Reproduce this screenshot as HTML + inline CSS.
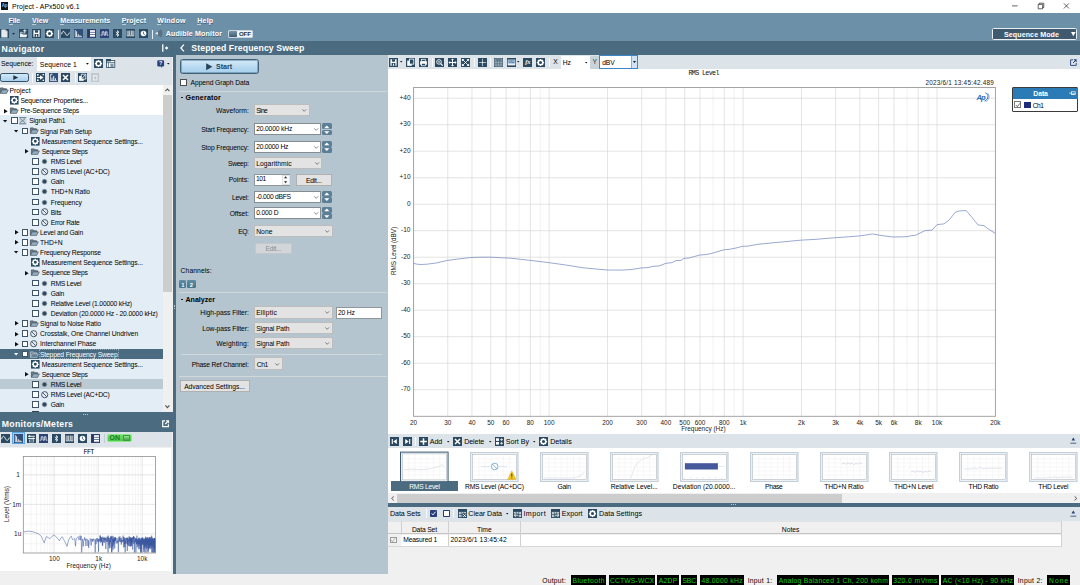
<!DOCTYPE html>
<html><head><meta charset="utf-8"><title>Project - APx500 v6.1</title>
<style>
html,body{margin:0;padding:0;}
body{width:1080px;height:585px;overflow:hidden;background:#f0f0f0;font-family:'Liberation Sans', sans-serif;position:relative;}
#r{position:absolute;left:0;top:0;width:1080px;height:585px;overflow:hidden;}
#r div,#r svg{position:absolute;box-sizing:border-box;}
#r svg{overflow:visible;}
#r svg text{font-family:'Liberation Sans', sans-serif;}
</style></head>
<body><div id="r">
<div style="left:0px;top:0px;width:1080px;height:12.75px;background:#fff;"></div>
<div style="left:0.9px;top:2.2px;width:7.6px;height:7.6px;background:#0c141c;"></div>
<div style="top:1.2px;line-height:10px;font-size:4.6px;color:#7fb8e6;letter-spacing:-0.3px;white-space:pre;font-weight:bold;left:-195.45px;width:400px;text-align:center;">Ap</div>
<div style="top:1.8px;line-height:10px;font-size:6.9px;color:#000;letter-spacing:0.06px;white-space:pre;left:12px;">Project - APx500 v6.1</div>
<svg style="left:1010px;top:0px;" width="70" height="12.75" viewBox="0 0 70 12.75"><path d="M2 5.9h5.6" stroke="#222" stroke-width="0.7" fill="none"/><path d="M28.2 4.4h4.4v4.4h-4.4z M29.4 4.4v-1.2h4.4v4.4h-1.2" stroke="#222" stroke-width="0.7" fill="none"/><path d="M53.8 3.3l5.2 5.2M59 3.3l-5.2 5.2" stroke="#222" stroke-width="0.7" fill="none"/></svg>
<div style="left:0px;top:12.75px;width:1080px;height:28.5px;background:#6d90a9;"></div>
<div style="top:16.1px;line-height:10px;font-size:7.1px;color:#fff;letter-spacing:-0.18px;white-space:pre;font-weight:bold;left:8.5px;text-shadow:0.3px 0.5px 0.5px rgba(30,50,70,.55);">File</div>
<div style="left:8.5px;top:24.3px;width:4.2px;height:0.6px;background:rgba(255,255,255,.55);"></div>
<div style="top:16.1px;line-height:10px;font-size:7.1px;color:#fff;letter-spacing:0.14px;white-space:pre;font-weight:bold;left:31.9px;text-shadow:0.3px 0.5px 0.5px rgba(30,50,70,.55);">View</div>
<div style="left:31.9px;top:24.3px;width:4.2px;height:0.6px;background:rgba(255,255,255,.55);"></div>
<div style="top:16.1px;line-height:10px;font-size:7.1px;color:#fff;letter-spacing:0.03px;white-space:pre;font-weight:bold;left:60.25px;text-shadow:0.3px 0.5px 0.5px rgba(30,50,70,.55);">Measurements</div>
<div style="left:60.25px;top:24.3px;width:4.2px;height:0.6px;background:rgba(255,255,255,.55);"></div>
<div style="top:16.1px;line-height:10px;font-size:7.1px;color:#fff;letter-spacing:0.03px;white-space:pre;font-weight:bold;left:121.8px;text-shadow:0.3px 0.5px 0.5px rgba(30,50,70,.55);">Project</div>
<div style="left:121.8px;top:24.3px;width:4.2px;height:0.6px;background:rgba(255,255,255,.55);"></div>
<div style="top:16.1px;line-height:10px;font-size:7.1px;color:#fff;letter-spacing:0.21px;white-space:pre;font-weight:bold;left:157.3px;text-shadow:0.3px 0.5px 0.5px rgba(30,50,70,.55);">Window</div>
<div style="left:157.3px;top:24.3px;width:4.2px;height:0.6px;background:rgba(255,255,255,.55);"></div>
<div style="top:16.1px;line-height:10px;font-size:7.1px;color:#fff;letter-spacing:0.16px;white-space:pre;font-weight:bold;left:197.3px;text-shadow:0.3px 0.5px 0.5px rgba(30,50,70,.55);">Help</div>
<div style="left:197.3px;top:24.3px;width:4.2px;height:0.6px;background:rgba(255,255,255,.55);"></div>
<svg style="left:0px;top:29.4px;" width="9" height="9" viewBox="0 0 9 9"><rect x="0" y="0" width="9" height="9" fill="#2b4a61"/><path d="M1.3 0.5h4.2l2 2v6H1.3z" fill="#e4e9ec"/><path d="M5.5 0.5v2h2z" fill="#9fb0bd"/></svg>
<svg style="left:12.3px;top:33px;" width="3" height="2" viewBox="0 0 3 2"><path d="M0 0h3L1.5 1.8z" fill="#1d2a36"/></svg>
<svg style="left:18.6px;top:29.4px;" width="9.2" height="9" viewBox="0 0 9.2 9"><rect x="0" y="0" width="9.2" height="9" fill="#2b4a61"/><path d="M0.9 4.6h2.2l0.8 0.8h4.4L7.4 8.2H0.9z" fill="#eef2f5"/><path d="M1.4 4.4V3.3h2l.7.8h1.2" fill="none" stroke="#eef2f5" stroke-width="0.7"/><path d="M5.8 0.4v4M4.2 1.7h3.2" stroke="#fff" stroke-width="0.9"/></svg>
<svg style="left:31.9px;top:29.4px" width="9" height="9" viewBox="0 0 9 9"><rect x="0" y="0" width="9" height="9" fill="#2b4a61"/><path d="M1.4 1.2h6.2v6.6H1.4z" fill="#fff"/><rect x="2.9" y="1.2" width="3.2" height="2.5" fill="#2b4a61"/><rect x="2.6" y="5" width="3.8" height="2.8" fill="#2b4a61"/><rect x="4.1" y="5.6" width="0.9" height="2.2" fill="#fff"/></svg>
<svg style="left:44.75px;top:29.4px" width="9" height="9" viewBox="0 0 9 9"><rect x="0" y="0" width="9" height="9" fill="#2b4a61"/><circle cx="4.5" cy="4.5" r="2.3" fill="none" stroke="#fff" stroke-width="1.5"/><path d="M4.5 0.9v1.2M4.5 6.9v1.2M0.9 4.5h1.2M6.9 4.5h1.2M2 2l.85.85M6.15 6.15L7 7M7 2l-.85.85M2.85 6.15L2 7" stroke="#fff" stroke-width="1.25"/></svg>
<div style="left:57.7px;top:29.6px;width:0.7px;height:9.2px;background:#e6edf2;"></div>
<svg style="left:61px;top:29.4px" width="9" height="9" viewBox="0 0 9 9"><rect x="0" y="0" width="9" height="9" fill="#2b4a61"/><path d="M0.6 5.2C1.6 1.6 2.9 1.6 4.2 4.3S6.9 7.2 8.4 3.6" fill="none" stroke="#fff" stroke-width="0.9"/></svg>
<svg style="left:74px;top:29.4px" width="9" height="9" viewBox="0 0 9 9"><rect x="0" y="0" width="9" height="9" fill="#2b4a61"/><rect x="0" y="0" width="9" height="9" fill="#30507a"/><path d="M1.3 1v6.7h6.7" fill="none" stroke="#fff" stroke-width="0.7"/><path d="M2.6 7.4V2.3M4.3 7.4V5.2M6 7.4V6.2" stroke="#fff" stroke-width="0.9"/></svg>
<svg style="left:87px;top:29.4px" width="9" height="9" viewBox="0 0 9 9"><rect x="0" y="0" width="9" height="9" fill="#2b4a61"/><rect x="0" y="0" width="9" height="9" fill="#2e4272"/><rect x="3" y="1.2" width="5" height="1.7" fill="#fff"/><rect x="3" y="3.6" width="5" height="1.7" fill="#fff"/><rect x="3" y="6" width="5" height="1.7" fill="#fff"/><path d="M1 2h1.4M1 4.4h1.4M1 6.8h1.4" stroke="#1a2748" stroke-width="0.9"/></svg>
<svg style="left:100px;top:29.4px" width="9" height="9" viewBox="0 0 9 9"><rect x="0" y="0" width="9" height="9" fill="#2b4a61"/><rect x="0" y="0" width="9" height="9" fill="#2c4374"/><path d="M0.7 6.2h1.5V2.8h1.8v3.4h1.4V2.8h1.6v3.4h1.3" fill="none" stroke="#fff" stroke-width="0.75"/></svg>
<svg style="left:113px;top:29.4px" width="9" height="9" viewBox="0 0 9 9"><rect x="0" y="0" width="9" height="9" fill="#2b4a61"/><path d="M2.8 2.9l3.2 3-1.6 1.5V1.6L6 3.1 2.8 6.1" fill="none" stroke="#fff" stroke-width="0.75"/></svg>
<svg style="left:126px;top:29.4px" width="9" height="9" viewBox="0 0 9 9"><rect x="0" y="0" width="9" height="9" fill="#2b4a61"/><path d="M1.2 1.6v5.4h1.6V1.6M3.7 1.6v5.4h1.6V1.6M6.2 1.6v5.4h1.6V1.6" fill="none" stroke="#fff" stroke-width="0.7"/></svg>
<svg style="left:139px;top:29.4px" width="9" height="9" viewBox="0 0 9 9"><rect x="0" y="0" width="9" height="9" fill="#2b4a61"/><circle cx="4.5" cy="4.5" r="2.8" fill="#fff"/><path d="M4.4 2.6v2.1l1.4 0.9" fill="none" stroke="#2b4a61" stroke-width="0.8"/></svg>
<div style="left:152.2px;top:29.6px;width:0.7px;height:9.2px;background:#e6edf2;"></div>
<svg style="left:155.2px;top:29.3px;" width="8" height="8.6" viewBox="0 0 8 8.6"><path d="M2.4 2.6L6.2 0.2c1.6 2.4 1.6 5.8 0 8.2L2.4 6z" fill="#5c7181"/><path d="M0.2 4.3L2.8 2.7v3.2z" fill="#eef3f6"/></svg>
<div style="top:29px;line-height:10px;font-size:7.1px;color:#fff;letter-spacing:0.17px;white-space:pre;font-weight:bold;left:165.7px;text-shadow:0.3px 0.5px 0.5px rgba(30,50,70,.55);">Audible Monitor</div>
<div style="left:228px;top:30.3px;width:24.7px;height:7.5px;background:#f2f5f7;border:0.6px solid #c9d4dc;border-radius:1.2px;"></div>
<div style="left:229.2px;top:31.3px;width:8.2px;height:5.4px;background:#56748a;border-radius:0.8px;background:linear-gradient(#7a94a7,#3f5c72);"></div>
<div style="top:29.3px;line-height:10px;font-size:6.2px;color:#20384a;letter-spacing:-0.1px;white-space:pre;font-weight:bold;left:44.95px;width:400px;text-align:center;">OFF</div>
<div style="left:992.2px;top:28.3px;width:85.3px;height:11.4px;background:#3f5a6e;border:0.7px solid #e9eff3;border-radius:1.6px;"></div>
<div style="top:29.6px;line-height:10px;font-size:7.1px;color:#fff;letter-spacing:0.08px;white-space:pre;font-weight:bold;left:831.54px;width:400px;text-align:center;">Sequence Mode</div>
<svg style="left:1071px;top:31.7px;" width="5" height="5" viewBox="0 0 5 5"><path d="M0 0h4.6L2.3 4.2z" fill="#fff"/></svg>
<div style="left:0px;top:40.9px;width:1080px;height:16.1px;background:#4a6b80;"></div>
<div style="top:43.5px;line-height:10px;font-size:8.7px;color:#fff;letter-spacing:0.3px;white-space:pre;font-weight:bold;left:1.6px;">Navigator</div>
<svg style="left:161.7px;top:44.2px;" width="7" height="8" viewBox="0 0 7 8"><path d="M0.8 0.2v7.6" stroke="#fff" stroke-width="1.3"/><path d="M4.6 2.2L6.4 4 4.6 5.8 2.8 4z" fill="#fff"/></svg>
<svg style="left:180.2px;top:44px;" width="5" height="8" viewBox="0 0 5 8"><path d="M3.9 0.6L0.9 4l3 3.4" fill="none" stroke="#fff" stroke-width="1.3"/></svg>
<div style="top:43.2px;line-height:10px;font-size:8.7px;color:#fff;letter-spacing:0.11px;white-space:pre;font-weight:bold;left:191.3px;">Stepped Frequency Sweep</div>
<div style="left:0px;top:573.5px;width:1080px;height:11.5px;background:#f0f0f0;"></div>
<div style="top:575.8px;line-height:10px;font-size:6.75px;color:#000;letter-spacing:0.22px;white-space:pre;left:542.3px;">Output:</div>
<div style="left:571px;top:575.3px;width:35px;height:9.7px;background:#000;"></div>
<div style="top:575.9px;line-height:10px;font-size:6.75px;color:#14cc14;letter-spacing:0.43px;white-space:pre;left:388.71px;width:400px;text-align:center;">Bluetooth</div>
<div style="left:608.7px;top:575.3px;width:46.6px;height:9.7px;background:#000;"></div>
<div style="top:575.9px;line-height:10px;font-size:6.75px;color:#14cc14;letter-spacing:0.14px;white-space:pre;left:432.07px;width:400px;text-align:center;">CCTWS-WCX</div>
<div style="left:657.3px;top:575.3px;width:21.4px;height:9.7px;background:#000;"></div>
<div style="top:575.9px;line-height:10px;font-size:6.75px;color:#14cc14;letter-spacing:0.29px;white-space:pre;left:468.14px;width:400px;text-align:center;">A2DP</div>
<div style="left:681.3px;top:575.3px;width:16px;height:9.7px;background:#000;"></div>
<div style="top:575.9px;line-height:10px;font-size:6.75px;color:#14cc14;letter-spacing:-0.16px;white-space:pre;left:489.22px;width:400px;text-align:center;">SBC</div>
<div style="left:700px;top:575.3px;width:44px;height:9.7px;background:#000;"></div>
<div style="top:575.9px;line-height:10px;font-size:6.75px;color:#14cc14;letter-spacing:0.32px;white-space:pre;left:522.16px;width:400px;text-align:center;">48.0000 kHz</div>
<div style="top:575.8px;line-height:10px;font-size:6.75px;color:#000;letter-spacing:0.26px;white-space:pre;left:747.7px;">Input 1:</div>
<div style="left:777.3px;top:575.3px;width:112px;height:9.7px;background:#000;"></div>
<div style="top:575.9px;line-height:10px;font-size:6.75px;color:#14cc14;letter-spacing:0.29px;white-space:pre;left:633.45px;width:400px;text-align:center;">Analog Balanced 1 Ch, 200 kohm</div>
<div style="left:891.7px;top:575.3px;width:47.3px;height:9.7px;background:#000;"></div>
<div style="top:575.9px;line-height:10px;font-size:6.75px;color:#14cc14;letter-spacing:0.44px;white-space:pre;left:715.57px;width:400px;text-align:center;">320.0 mVrms</div>
<div style="left:941.3px;top:575.3px;width:73px;height:9.7px;background:#000;"></div>
<div style="top:575.9px;line-height:10px;font-size:6.75px;color:#14cc14;letter-spacing:0.3px;white-space:pre;left:777.95px;width:400px;text-align:center;">AC (&lt;10 Hz) - 90 kHz</div>
<div style="top:575.8px;line-height:10px;font-size:6.75px;color:#000;letter-spacing:0.31px;white-space:pre;left:1017.7px;">Input 2:</div>
<div style="left:1047.3px;top:575.3px;width:22.7px;height:9.7px;background:#000;"></div>
<div style="top:575.9px;line-height:10px;font-size:6.75px;color:#14cc14;letter-spacing:0.99px;white-space:pre;left:859.14px;width:400px;text-align:center;">None</div>
<div style="left:0px;top:57px;width:172.2px;height:28px;background:#dde4e9;"></div>
<div style="top:58.7px;line-height:10px;font-size:6.75px;color:#000;letter-spacing:0.02px;white-space:pre;left:1px;">Sequence:</div>
<div style="left:37px;top:57.2px;width:54px;height:13.8px;background:#fff;"></div>
<div style="top:59.6px;line-height:10px;font-size:6.75px;color:#000;letter-spacing:0.1px;white-space:pre;left:39.8px;">Sequence 1</div>
<svg style="left:86px;top:63.2px;" width="3" height="2" viewBox="0 0 3 2"><path d="M0 0h2.8L1.4 1.7z" fill="#111"/></svg>
<svg style="left:93.5px;top:59.4px" width="9" height="9" viewBox="0 0 9 9"><rect x="0" y="0" width="9" height="9" fill="#2b4a61"/><circle cx="4.5" cy="4.5" r="2.3" fill="none" stroke="#fff" stroke-width="1.5"/><path d="M4.5 0.9v1.2M4.5 6.9v1.2M0.9 4.5h1.2M6.9 4.5h1.2M2 2l.85.85M6.15 6.15L7 7M7 2l-.85.85M2.85 6.15L2 7" stroke="#fff" stroke-width="1.25"/></svg>
<svg style="left:106.2px;top:59.4px;" width="9.3" height="9" viewBox="0 0 9.3 9"><rect x="0.4" y="1.4" width="8.4" height="7.2" fill="#fff"/><rect x="0" y="0" width="5" height="2.4" fill="#2b4a61"/><rect x="0.4" y="1.4" width="8.4" height="7.2" fill="none" stroke="#2b4a61" stroke-width="0.8"/><path d="M2.4 3.6v5M0.4 3.6h8.4" stroke="#2b4a61" stroke-width="0.7"/><rect x="4.4" y="4.6" width="3.2" height="3.4" fill="#7f95a6"/></svg>
<svg style="left:157.3px;top:59.6px;" width="7.6" height="8.6" viewBox="0 0 7.6 8.6"><path d="M0.3 1.3Q0.3 0.3 1.3 0.3h4.8Q7.1 0.3 7.1 1.3v4.2Q7.1 6.5 6.1 6.5H5l-.9 1.7V6.5H1.3Q0.3 6.5 0.3 5.5z" fill="#27407a"/><text x="3.7" y="5.4" font-size="5.4" font-weight="bold" fill="#fff" text-anchor="middle">?</text></svg>
<svg style="left:166.6px;top:63.2px;" width="3" height="2" viewBox="0 0 3 2"><path d="M0 0h2.6L1.3 1.6z" fill="#111"/></svg>
<div style="left:0.2px;top:72.9px;width:28.6px;height:9.1px;background:#bcdcf3;border:0.9px solid #34536a;border-radius:2.2px;background:linear-gradient(#d3e8f7,#a9d0ee);"></div>
<svg style="left:12.8px;top:75px;" width="6" height="5.2" viewBox="0 0 6 5.2"><path d="M0.3 0.2v4.8L5.2 2.6z" fill="#22323e"/></svg>
<div style="left:32.4px;top:73.4px;width:0.6px;height:9.6px;background:#f7f9fb;"></div>
<svg style="left:35.6px;top:73.4px" width="9" height="9" viewBox="0 0 9 9"><rect x="0" y="0" width="9" height="9" fill="#2b4a61"/><path d="M1 4.5h3" stroke="#fff" stroke-width="1.1"/><path d="M4 2.2v4.6l3.6-2.3z" fill="#fff"/><rect x="1" y="1" width="1.6" height="1.6" fill="#fff"/><rect x="1" y="6.4" width="1.6" height="1.6" fill="#fff"/><rect x="6.6" y="1" width="1.4" height="1.4" fill="#fff"/><rect x="6.6" y="6.6" width="1.4" height="1.4" fill="#fff"/></svg>
<svg style="left:48.5px;top:73.4px" width="9" height="9" viewBox="0 0 9 9"><rect x="0" y="0" width="9" height="9" fill="#2b4a61"/><rect x="0" y="0" width="9" height="9" fill="#2f4f78"/><path d="M1.4 1.2v6.4h6.4" fill="none" stroke="#fff" stroke-width="0.7"/><path d="M3 7.3V4.6M4.7 7.3V3M6.4 7.3V5.2" stroke="#fff" stroke-width="0.9"/><path d="M1.6 1.4h2M2.6 0.5v2" stroke="#fff" stroke-width="0.5"/></svg>
<svg style="left:61.3px;top:73.4px" width="9" height="9" viewBox="0 0 9 9"><rect x="0" y="0" width="9" height="9" fill="#2b4a61"/><path d="M2 2l5 5M7 2L2 7" stroke="#fff" stroke-width="1.5"/></svg>
<div style="left:74.6px;top:73.4px;width:0.6px;height:9.6px;background:#f7f9fb;"></div>
<svg style="left:78.1px;top:73.4px" width="9" height="9" viewBox="0 0 9 9"><rect x="0" y="0" width="9" height="9" fill="#2b4a61"/><rect x="1.1" y="3" width="4.6" height="4.8" fill="#fff"/><path d="M3.3 1.2h4.5v4.9H3.3z" fill="#2b4a61" stroke="#fff" stroke-width="0.8"/><path d="M3.8 5.6L7.3 1.8" stroke="#fff" stroke-width="0.9"/></svg>
<svg style="left:91.3px;top:73.4px;" width="8.2" height="9" viewBox="0 0 8.2 9"><rect x="0" y="0" width="8.2" height="9" fill="#c3c9ce"/><rect x="2" y="2" width="4.4" height="5.6" fill="#e6eaed"/><path d="M4.2 3.4v3M2.9 4.9h2.6" stroke="#aab2b9" stroke-width="0.7"/></svg>
<div style="left:0px;top:84.9px;width:172.2px;height:327.5px;background:#fff;"></div>
<div style="left:0px;top:115.2px;width:163.2px;height:297.2px;background:#e3edf6;"></div>
<svg style="left:0px;top:86.9px;" width="8.8" height="7" viewBox="0 0 8.8 7"><path d="M0.4 6.3V0.9h2.9l.7.9h2.6v1.2" fill="#6f8190" stroke="#3f4d58" stroke-width="0.7"/><path d="M2.1 2.9h6.2L6.7 6.4H0.4z" fill="#93acbf" stroke="#3f4d58" stroke-width="0.6"/></svg>
<div style="top:85.97px;line-height:10px;font-size:6.75px;color:#000;letter-spacing:-0px;white-space:pre;left:9.6px;">Project</div>
<svg style="left:10px;top:96.24px" width="8.6" height="8.6" viewBox="0 0 9 9"><rect x="0" y="0" width="9" height="9" fill="#2b4a61"/><circle cx="4.5" cy="4.5" r="2.3" fill="none" stroke="#fff" stroke-width="1.5"/><path d="M4.5 0.9v1.2M4.5 6.9v1.2M0.9 4.5h1.2M6.9 4.5h1.2M2 2l.85.85M6.15 6.15L7 7M7 2l-.85.85M2.85 6.15L2 7" stroke="#fff" stroke-width="1.25"/></svg>
<div style="top:96.11px;line-height:10px;font-size:6.75px;color:#000;letter-spacing:-0.15px;white-space:pre;left:20.4px;">Sequencer Properties...</div>
<svg style="left:3.5px;top:108.55px;" width="4" height="4.6" viewBox="0 0 4 4.6"><path d="M0 0v4.4L3.7 2.2z" fill="#111"/></svg>
<svg style="left:10px;top:107.18px;" width="8.8" height="7" viewBox="0 0 8.8 7"><path d="M0.4 6.3V0.9h2.9l.7.9h2.6v1.2" fill="#6f8190" stroke="#3f4d58" stroke-width="0.7"/><path d="M2.1 2.9h6.2L6.7 6.4H0.4z" fill="#93acbf" stroke="#3f4d58" stroke-width="0.6"/></svg>
<div style="top:106.25px;line-height:10px;font-size:6.75px;color:#000;letter-spacing:-0.21px;white-space:pre;left:20.4px;">Pre-Sequence Steps</div>
<svg style="left:3.2px;top:119.59px;" width="4.4" height="3" viewBox="0 0 4.4 3"><path d="M0 0h4.2L2.1 2.6z" fill="#111"/></svg>
<div style="left:11px;top:117.42px;width:6.7px;height:6.7px;background:#fff;border:0.8px solid #3e5468;"></div>
<svg style="left:19.3px;top:117.12px;" width="7.4" height="7.4" viewBox="0 0 7.4 7.4"><rect x="0" y="0" width="7.4" height="7.4" fill="#cdd7de"/><path d="M0.2 0.6h7M0.2 6.8h7" stroke="#5d7486" stroke-width="0.9"/><path d="M1.2 1.8l4.8 3.8M6 1.8L1.2 5.6" stroke="#6d8394" stroke-width="0.9"/></svg>
<div style="top:116.39px;line-height:10px;font-size:6.75px;color:#000;letter-spacing:-0.17px;white-space:pre;left:29.2px;">Signal Path1</div>
<svg style="left:13.6px;top:129.73px;" width="4.4" height="3" viewBox="0 0 4.4 3"><path d="M0 0h4.2L2.1 2.6z" fill="#111"/></svg>
<div style="left:21.8px;top:127.56px;width:6.7px;height:6.7px;background:#fff;border:0.8px solid #3e5468;"></div>
<svg style="left:30px;top:127.46px;" width="8.8" height="7" viewBox="0 0 8.8 7"><path d="M0.4 6.3V0.9h2.9l.7.9h2.6v1.2" fill="#6f8190" stroke="#3f4d58" stroke-width="0.7"/><path d="M2.1 2.9h6.2L6.7 6.4H0.4z" fill="#93acbf" stroke="#3f4d58" stroke-width="0.6"/></svg>
<div style="top:126.53px;line-height:10px;font-size:6.75px;color:#000;letter-spacing:-0.14px;white-space:pre;left:40px;">Signal Path Setup</div>
<svg style="left:31.3px;top:136.8px" width="8.6" height="8.6" viewBox="0 0 9 9"><rect x="0" y="0" width="9" height="9" fill="#2b4a61"/><circle cx="4.5" cy="4.5" r="2.3" fill="none" stroke="#fff" stroke-width="1.5"/><path d="M4.5 0.9v1.2M4.5 6.9v1.2M0.9 4.5h1.2M6.9 4.5h1.2M2 2l.85.85M6.15 6.15L7 7M7 2l-.85.85M2.85 6.15L2 7" stroke="#fff" stroke-width="1.25"/></svg>
<div style="top:136.67px;line-height:10px;font-size:6.75px;color:#000;letter-spacing:-0.14px;white-space:pre;left:41.7px;">Measurement Sequence Settings...</div>
<svg style="left:24.8px;top:149.11px;" width="4" height="4.6" viewBox="0 0 4 4.6"><path d="M0 0v4.4L3.7 2.2z" fill="#111"/></svg>
<svg style="left:31.3px;top:147.74px;" width="8.8" height="7" viewBox="0 0 8.8 7"><path d="M0.4 6.3V0.9h2.9l.7.9h2.6v1.2" fill="#6f8190" stroke="#3f4d58" stroke-width="0.7"/><path d="M2.1 2.9h6.2L6.7 6.4H0.4z" fill="#93acbf" stroke="#3f4d58" stroke-width="0.6"/></svg>
<div style="top:146.81px;line-height:10px;font-size:6.75px;color:#000;letter-spacing:-0.25px;white-space:pre;left:41.7px;">Sequence Steps</div>
<div style="left:32px;top:157.98px;width:6.7px;height:6.7px;background:#fff;border:0.8px solid #3e5468;"></div>
<svg style="left:42px;top:159.05px;" width="5" height="5" viewBox="0 0 5 5"><circle cx="2.5" cy="2.5" r="2.3" fill="#33485a" stroke="#8b9ba7" stroke-width="0.7"/></svg>
<div style="top:156.95px;line-height:10px;font-size:6.75px;color:#000;letter-spacing:-0.28px;white-space:pre;left:50.8px;">RMS Level</div>
<div style="left:32px;top:168.12px;width:6.7px;height:6.7px;background:#fff;border:0.8px solid #3e5468;"></div>
<svg style="left:40.6px;top:167.82px;" width="7.4" height="7.4" viewBox="0 0 7.4 7.4"><circle cx="3.7" cy="3.7" r="3.1" fill="none" stroke="#3c4c5a" stroke-width="0.9"/><path d="M1.6 1.6l4.2 4.2" stroke="#3c4c5a" stroke-width="0.9"/></svg>
<div style="top:167.09px;line-height:10px;font-size:6.75px;color:#000;letter-spacing:-0.22px;white-space:pre;left:50.8px;">RMS Level (AC+DC)</div>
<div style="left:32px;top:178.26px;width:6.7px;height:6.7px;background:#fff;border:0.8px solid #3e5468;"></div>
<svg style="left:42px;top:179.33px;" width="5" height="5" viewBox="0 0 5 5"><circle cx="2.5" cy="2.5" r="2.3" fill="#33485a" stroke="#8b9ba7" stroke-width="0.7"/></svg>
<div style="top:177.23px;line-height:10px;font-size:6.75px;color:#000;letter-spacing:-0.25px;white-space:pre;left:50.8px;">Gain</div>
<div style="left:32px;top:188.4px;width:6.7px;height:6.7px;background:#fff;border:0.8px solid #3e5468;"></div>
<svg style="left:42px;top:189.47px;" width="5" height="5" viewBox="0 0 5 5"><circle cx="2.5" cy="2.5" r="2.3" fill="#33485a" stroke="#8b9ba7" stroke-width="0.7"/></svg>
<div style="top:187.37px;line-height:10px;font-size:6.75px;color:#000;letter-spacing:-0.1px;white-space:pre;left:50.8px;">THD+N Ratio</div>
<div style="left:32px;top:198.54px;width:6.7px;height:6.7px;background:#fff;border:0.8px solid #3e5468;"></div>
<svg style="left:42px;top:199.61px;" width="5" height="5" viewBox="0 0 5 5"><circle cx="2.5" cy="2.5" r="2.3" fill="#33485a" stroke="#8b9ba7" stroke-width="0.7"/></svg>
<div style="top:197.51px;line-height:10px;font-size:6.75px;color:#000;letter-spacing:-0.1px;white-space:pre;left:50.8px;">Frequency</div>
<div style="left:32px;top:208.68px;width:6.7px;height:6.7px;background:#fff;border:0.8px solid #3e5468;"></div>
<svg style="left:40.6px;top:208.38px;" width="7.4" height="7.4" viewBox="0 0 7.4 7.4"><circle cx="3.7" cy="3.7" r="3.1" fill="none" stroke="#3c4c5a" stroke-width="0.9"/><path d="M1.6 1.6l4.2 4.2" stroke="#3c4c5a" stroke-width="0.9"/></svg>
<div style="top:207.65px;line-height:10px;font-size:6.75px;color:#000;letter-spacing:-0.19px;white-space:pre;left:50.8px;">Bits</div>
<div style="left:32px;top:218.82px;width:6.7px;height:6.7px;background:#fff;border:0.8px solid #3e5468;"></div>
<svg style="left:40.6px;top:218.52px;" width="7.4" height="7.4" viewBox="0 0 7.4 7.4"><circle cx="3.7" cy="3.7" r="3.1" fill="none" stroke="#3c4c5a" stroke-width="0.9"/><path d="M1.6 1.6l4.2 4.2" stroke="#3c4c5a" stroke-width="0.9"/></svg>
<div style="top:217.79px;line-height:10px;font-size:6.75px;color:#000;letter-spacing:-0.24px;white-space:pre;left:50.8px;">Error Rate</div>
<svg style="left:14.6px;top:230.23px;" width="4" height="4.6" viewBox="0 0 4 4.6"><path d="M0 0v4.4L3.7 2.2z" fill="#111"/></svg>
<div style="left:21.8px;top:228.96px;width:6.7px;height:6.7px;background:#fff;border:0.8px solid #3e5468;"></div>
<svg style="left:30px;top:228.86px;" width="8.8" height="7" viewBox="0 0 8.8 7"><path d="M0.4 6.3V0.9h2.9l.7.9h2.6v1.2" fill="#6f8190" stroke="#3f4d58" stroke-width="0.7"/><path d="M2.1 2.9h6.2L6.7 6.4H0.4z" fill="#93acbf" stroke="#3f4d58" stroke-width="0.6"/></svg>
<div style="top:227.93px;line-height:10px;font-size:6.75px;color:#000;letter-spacing:-0.17px;white-space:pre;left:40px;">Level and Gain</div>
<svg style="left:14.6px;top:240.37px;" width="4" height="4.6" viewBox="0 0 4 4.6"><path d="M0 0v4.4L3.7 2.2z" fill="#111"/></svg>
<div style="left:21.8px;top:239.1px;width:6.7px;height:6.7px;background:#fff;border:0.8px solid #3e5468;"></div>
<svg style="left:30px;top:239px;" width="8.8" height="7" viewBox="0 0 8.8 7"><path d="M0.4 6.3V0.9h2.9l.7.9h2.6v1.2" fill="#6f8190" stroke="#3f4d58" stroke-width="0.7"/><path d="M2.1 2.9h6.2L6.7 6.4H0.4z" fill="#93acbf" stroke="#3f4d58" stroke-width="0.6"/></svg>
<div style="top:238.07px;line-height:10px;font-size:6.75px;color:#000;letter-spacing:-0.04px;white-space:pre;left:40px;">THD+N</div>
<svg style="left:13.6px;top:251.41px;" width="4.4" height="3" viewBox="0 0 4.4 3"><path d="M0 0h4.2L2.1 2.6z" fill="#111"/></svg>
<div style="left:21.8px;top:249.24px;width:6.7px;height:6.7px;background:#fff;border:0.8px solid #3e5468;"></div>
<svg style="left:30px;top:249.14px;" width="8.8" height="7" viewBox="0 0 8.8 7"><path d="M0.4 6.3V0.9h2.9l.7.9h2.6v1.2" fill="#6f8190" stroke="#3f4d58" stroke-width="0.7"/><path d="M2.1 2.9h6.2L6.7 6.4H0.4z" fill="#93acbf" stroke="#3f4d58" stroke-width="0.6"/></svg>
<div style="top:248.21px;line-height:10px;font-size:6.75px;color:#000;letter-spacing:-0.19px;white-space:pre;left:40px;">Frequency Response</div>
<svg style="left:31.3px;top:258.48px" width="8.6" height="8.6" viewBox="0 0 9 9"><rect x="0" y="0" width="9" height="9" fill="#2b4a61"/><circle cx="4.5" cy="4.5" r="2.3" fill="none" stroke="#fff" stroke-width="1.5"/><path d="M4.5 0.9v1.2M4.5 6.9v1.2M0.9 4.5h1.2M6.9 4.5h1.2M2 2l.85.85M6.15 6.15L7 7M7 2l-.85.85M2.85 6.15L2 7" stroke="#fff" stroke-width="1.25"/></svg>
<div style="top:258.35px;line-height:10px;font-size:6.75px;color:#000;letter-spacing:-0.14px;white-space:pre;left:41.7px;">Measurement Sequence Settings...</div>
<svg style="left:24.8px;top:270.79px;" width="4" height="4.6" viewBox="0 0 4 4.6"><path d="M0 0v4.4L3.7 2.2z" fill="#111"/></svg>
<svg style="left:31.3px;top:269.42px;" width="8.8" height="7" viewBox="0 0 8.8 7"><path d="M0.4 6.3V0.9h2.9l.7.9h2.6v1.2" fill="#6f8190" stroke="#3f4d58" stroke-width="0.7"/><path d="M2.1 2.9h6.2L6.7 6.4H0.4z" fill="#93acbf" stroke="#3f4d58" stroke-width="0.6"/></svg>
<div style="top:268.49px;line-height:10px;font-size:6.75px;color:#000;letter-spacing:-0.25px;white-space:pre;left:41.7px;">Sequence Steps</div>
<div style="left:32px;top:279.66px;width:6.7px;height:6.7px;background:#fff;border:0.8px solid #3e5468;"></div>
<svg style="left:42px;top:280.73px;" width="5" height="5" viewBox="0 0 5 5"><circle cx="2.5" cy="2.5" r="2.3" fill="#33485a" stroke="#8b9ba7" stroke-width="0.7"/></svg>
<div style="top:278.63px;line-height:10px;font-size:6.75px;color:#000;letter-spacing:-0.28px;white-space:pre;left:50.8px;">RMS Level</div>
<div style="left:32px;top:289.8px;width:6.7px;height:6.7px;background:#fff;border:0.8px solid #3e5468;"></div>
<svg style="left:42px;top:290.87px;" width="5" height="5" viewBox="0 0 5 5"><circle cx="2.5" cy="2.5" r="2.3" fill="#33485a" stroke="#8b9ba7" stroke-width="0.7"/></svg>
<div style="top:288.77px;line-height:10px;font-size:6.75px;color:#000;letter-spacing:-0.25px;white-space:pre;left:50.8px;">Gain</div>
<div style="left:32px;top:299.94px;width:6.7px;height:6.7px;background:#fff;border:0.8px solid #3e5468;"></div>
<svg style="left:42px;top:301.01px;" width="5" height="5" viewBox="0 0 5 5"><circle cx="2.5" cy="2.5" r="2.3" fill="#33485a" stroke="#8b9ba7" stroke-width="0.7"/></svg>
<div style="top:298.91px;line-height:10px;font-size:6.75px;color:#000;letter-spacing:-0.2px;white-space:pre;left:50.8px;">Relative Level (1.00000 kHz)</div>
<div style="left:32px;top:310.08px;width:6.7px;height:6.7px;background:#fff;border:0.8px solid #3e5468;"></div>
<svg style="left:42px;top:311.15px;" width="5" height="5" viewBox="0 0 5 5"><circle cx="2.5" cy="2.5" r="2.3" fill="#33485a" stroke="#8b9ba7" stroke-width="0.7"/></svg>
<div style="top:309.05px;line-height:10px;font-size:6.75px;color:#000;letter-spacing:-0.17px;white-space:pre;left:50.8px;">Deviation (20.0000 Hz - 20.0000 kHz)</div>
<svg style="left:14.6px;top:321.49px;" width="4" height="4.6" viewBox="0 0 4 4.6"><path d="M0 0v4.4L3.7 2.2z" fill="#111"/></svg>
<div style="left:21.8px;top:320.22px;width:6.7px;height:6.7px;background:#fff;border:0.8px solid #3e5468;"></div>
<svg style="left:30px;top:320.12px;" width="8.8" height="7" viewBox="0 0 8.8 7"><path d="M0.4 6.3V0.9h2.9l.7.9h2.6v1.2" fill="#6f8190" stroke="#3f4d58" stroke-width="0.7"/><path d="M2.1 2.9h6.2L6.7 6.4H0.4z" fill="#93acbf" stroke="#3f4d58" stroke-width="0.6"/></svg>
<div style="top:319.19px;line-height:10px;font-size:6.75px;color:#000;letter-spacing:-0.1px;white-space:pre;left:40px;">Signal to Noise Ratio</div>
<svg style="left:14.6px;top:331.63px;" width="4" height="4.6" viewBox="0 0 4 4.6"><path d="M0 0v4.4L3.7 2.2z" fill="#111"/></svg>
<div style="left:21.8px;top:330.36px;width:6.7px;height:6.7px;background:#fff;border:0.8px solid #3e5468;"></div>
<svg style="left:30px;top:330.06px;" width="7.4" height="7.4" viewBox="0 0 7.4 7.4"><circle cx="3.7" cy="3.7" r="3.1" fill="none" stroke="#3c4c5a" stroke-width="0.9"/><path d="M1.6 1.6l4.2 4.2" stroke="#3c4c5a" stroke-width="0.9"/></svg>
<div style="top:329.33px;line-height:10px;font-size:6.75px;color:#000;letter-spacing:-0.08px;white-space:pre;left:40px;">Crosstalk, One Channel Undriven</div>
<svg style="left:14.6px;top:341.77px;" width="4" height="4.6" viewBox="0 0 4 4.6"><path d="M0 0v4.4L3.7 2.2z" fill="#111"/></svg>
<div style="left:21.8px;top:340.5px;width:6.7px;height:6.7px;background:#fff;border:0.8px solid #3e5468;"></div>
<svg style="left:30px;top:340.2px;" width="7.4" height="7.4" viewBox="0 0 7.4 7.4"><circle cx="3.7" cy="3.7" r="3.1" fill="none" stroke="#3c4c5a" stroke-width="0.9"/><path d="M1.6 1.6l4.2 4.2" stroke="#3c4c5a" stroke-width="0.9"/></svg>
<div style="top:339.47px;line-height:10px;font-size:6.75px;color:#000;letter-spacing:-0.11px;white-space:pre;left:40px;">Interchannel Phase</div>
<div style="left:0px;top:348.84px;width:163px;height:10.34px;background:#4a6b80;"></div>
<div style="left:38.6px;top:349.34px;width:80.4px;height:9.34px;border:0.5px dotted rgba(220,232,240,.45);"></div>
<svg style="left:13.6px;top:352.81px;" width="4.4" height="3" viewBox="0 0 4.4 3"><path d="M0 0h4.2L2.1 2.6z" fill="#fff"/></svg>
<div style="left:21.8px;top:350.64px;width:6.7px;height:6.7px;background:#fff;border:0.8px solid #3e5468;"></div>
<svg style="left:30px;top:350.54px;" width="8.8" height="7" viewBox="0 0 8.8 7"><path d="M0.4 6.3V0.9h2.9l.7.9h2.6v1.2" fill="#6f8190" stroke="#c3d0d9" stroke-width="0.7"/><path d="M2.1 2.9h6.2L6.7 6.4H0.4z" fill="#5f7e94" stroke="#c3d0d9" stroke-width="0.6"/></svg>
<div style="top:349.61px;line-height:10px;font-size:6.75px;color:#fff;letter-spacing:-0.17px;white-space:pre;left:40px;">Stepped Frequency Sweep</div>
<svg style="left:31.3px;top:359.88px" width="8.6" height="8.6" viewBox="0 0 9 9"><rect x="0" y="0" width="9" height="9" fill="#2b4a61"/><circle cx="4.5" cy="4.5" r="2.3" fill="none" stroke="#fff" stroke-width="1.5"/><path d="M4.5 0.9v1.2M4.5 6.9v1.2M0.9 4.5h1.2M6.9 4.5h1.2M2 2l.85.85M6.15 6.15L7 7M7 2l-.85.85M2.85 6.15L2 7" stroke="#fff" stroke-width="1.25"/></svg>
<div style="top:359.75px;line-height:10px;font-size:6.75px;color:#000;letter-spacing:-0.14px;white-space:pre;left:41.7px;">Measurement Sequence Settings...</div>
<svg style="left:24.8px;top:372.19px;" width="4" height="4.6" viewBox="0 0 4 4.6"><path d="M0 0v4.4L3.7 2.2z" fill="#111"/></svg>
<svg style="left:31.3px;top:370.82px;" width="8.8" height="7" viewBox="0 0 8.8 7"><path d="M0.4 6.3V0.9h2.9l.7.9h2.6v1.2" fill="#6f8190" stroke="#3f4d58" stroke-width="0.7"/><path d="M2.1 2.9h6.2L6.7 6.4H0.4z" fill="#93acbf" stroke="#3f4d58" stroke-width="0.6"/></svg>
<div style="top:369.89px;line-height:10px;font-size:6.75px;color:#000;letter-spacing:-0.25px;white-space:pre;left:41.7px;">Sequence Steps</div>
<div style="left:0px;top:379.36px;width:163px;height:10.14px;background:#bccad3;"></div>
<div style="left:32px;top:381.06px;width:6.7px;height:6.7px;background:#fff;border:0.8px solid #3e5468;"></div>
<svg style="left:42px;top:382.13px;" width="5" height="5" viewBox="0 0 5 5"><circle cx="2.5" cy="2.5" r="2.3" fill="#33485a" stroke="#8b9ba7" stroke-width="0.7"/></svg>
<div style="top:380.03px;line-height:10px;font-size:6.75px;color:#000;letter-spacing:-0.28px;white-space:pre;left:50.8px;">RMS Level</div>
<div style="left:32px;top:391.2px;width:6.7px;height:6.7px;background:#fff;border:0.8px solid #3e5468;"></div>
<svg style="left:40.6px;top:390.9px;" width="7.4" height="7.4" viewBox="0 0 7.4 7.4"><circle cx="3.7" cy="3.7" r="3.1" fill="none" stroke="#3c4c5a" stroke-width="0.9"/><path d="M1.6 1.6l4.2 4.2" stroke="#3c4c5a" stroke-width="0.9"/></svg>
<div style="top:390.17px;line-height:10px;font-size:6.75px;color:#000;letter-spacing:-0.22px;white-space:pre;left:50.8px;">RMS Level (AC+DC)</div>
<div style="left:32px;top:401.34px;width:6.7px;height:6.7px;background:#fff;border:0.8px solid #3e5468;"></div>
<svg style="left:42px;top:402.41px;" width="5" height="5" viewBox="0 0 5 5"><circle cx="2.5" cy="2.5" r="2.3" fill="#33485a" stroke="#8b9ba7" stroke-width="0.7"/></svg>
<div style="top:400.31px;line-height:10px;font-size:6.75px;color:#000;letter-spacing:-0.25px;white-space:pre;left:50.8px;">Gain</div>
<div style="left:32px;top:411.48px;width:6.6px;height:3px;background:#39424a;"></div>
<div style="left:163.2px;top:84.9px;width:9px;height:327.5px;background:#f0f0f0;"></div>
<div style="left:163.2px;top:95.2px;width:9px;height:196.4px;background:#cdcdcd;"></div>
<svg style="left:165.2px;top:88.4px;" width="5" height="3.6" viewBox="0 0 5 3.6"><path d="M0.4 3.2L2.4 1 4.4 3.2" fill="none" stroke="#505050" stroke-width="1.1"/></svg>
<svg style="left:165.2px;top:405.4px;" width="5" height="3.6" viewBox="0 0 5 3.6"><path d="M0.4 0.4L2.4 2.6 4.4 0.4" fill="none" stroke="#505050" stroke-width="1.1"/></svg>
<div style="left:0px;top:412.4px;width:176px;height:19.8px;background:#4a6b80;"></div>
<div style="left:83.4px;top:414px;width:0.9px;height:0.9px;background:#b9c7d1;"></div>
<div style="left:85.2px;top:414px;width:0.9px;height:0.9px;background:#b9c7d1;"></div>
<div style="left:87px;top:414px;width:0.9px;height:0.9px;background:#b9c7d1;"></div>
<div style="top:419px;line-height:10px;font-size:8.7px;color:#fff;letter-spacing:0.29px;white-space:pre;font-weight:bold;left:1.8px;">Monitors/Meters</div>
<svg style="left:162px;top:420px;" width="7.4" height="7.4" viewBox="0 0 7.4 7.4"><path d="M3 0.9H0.7v5.7h5.7V4.3" fill="none" stroke="#fff" stroke-width="1.2"/><path d="M3.6 0.2h3.5v3.5z" fill="#fff"/><path d="M6 1.3L3.2 4.1" stroke="#fff" stroke-width="1.3"/></svg>
<div style="left:0px;top:432.2px;width:172.2px;height:14.6px;background:#dde4e9;"></div>
<svg style="left:0.9px;top:433.8px" width="9" height="9" viewBox="0 0 9 9"><rect x="0" y="0" width="9" height="9" fill="#2b4a61"/><path d="M0.6 5.2C1.6 1.6 2.9 1.6 4.2 4.3S6.9 7.2 8.4 3.6" fill="none" stroke="#fff" stroke-width="0.9"/></svg>
<div style="left:12.1px;top:432.3px;width:12.5px;height:12.1px;background:#a2cef2;border:0.7px solid #5aa5e6;"></div>
<svg style="left:13.9px;top:433.8px" width="9" height="9" viewBox="0 0 9 9"><rect x="0" y="0" width="9" height="9" fill="#2b4a61"/><rect x="0" y="0" width="9" height="9" fill="#30507a"/><path d="M1.3 1v6.7h6.7" fill="none" stroke="#fff" stroke-width="0.7"/><path d="M2.6 7.4V2.3M4.3 7.4V5.2M6 7.4V6.2" stroke="#fff" stroke-width="0.9"/></svg>
<svg style="left:26.5px;top:433.8px" width="9" height="9" viewBox="0 0 9 9"><rect x="0" y="0" width="9" height="9" fill="#2b4a61"/><path d="M1.2 2.3h6.6M1.2 4.5h6.6" stroke="#fff" stroke-width="0.9"/><path d="M3.2 1v2.6L1 2.3zM5.8 3.2v2.6L8 4.5z" fill="#fff"/><rect x="2.6" y="6" width="4.2" height="2" fill="none" stroke="#fff" stroke-width="0.5"/></svg>
<svg style="left:39.4px;top:433.8px" width="9" height="9" viewBox="0 0 9 9"><rect x="0" y="0" width="9" height="9" fill="#2b4a61"/><rect x="0" y="0" width="9" height="9" fill="#2c4374"/><path d="M0.7 6.2h1.5V2.8h1.8v3.4h1.4V2.8h1.6v3.4h1.3" fill="none" stroke="#fff" stroke-width="0.75"/></svg>
<svg style="left:52.3px;top:433.8px" width="9" height="9" viewBox="0 0 9 9"><rect x="0" y="0" width="9" height="9" fill="#2b4a61"/><path d="M2.8 2.9l3.2 3-1.6 1.5V1.6L6 3.1 2.8 6.1" fill="none" stroke="#fff" stroke-width="0.75"/></svg>
<svg style="left:65.3px;top:433.8px" width="9" height="9" viewBox="0 0 9 9"><rect x="0" y="0" width="9" height="9" fill="#2b4a61"/><path d="M1.2 1.6v5.4h1.6V1.6M3.7 1.6v5.4h1.6V1.6M6.2 1.6v5.4h1.6V1.6" fill="none" stroke="#fff" stroke-width="0.7"/></svg>
<svg style="left:78.2px;top:433.8px" width="9" height="9" viewBox="0 0 9 9"><rect x="0" y="0" width="9" height="9" fill="#2b4a61"/><circle cx="4.5" cy="4.5" r="2.8" fill="#fff"/><path d="M4.4 2.6v2.1l1.4 0.9" fill="none" stroke="#2b4a61" stroke-width="0.8"/></svg>
<svg style="left:91.2px;top:433.8px" width="9" height="9" viewBox="0 0 9 9"><rect x="0" y="0" width="9" height="9" fill="#2b4a61"/><rect x="0" y="0" width="9" height="9" fill="#2e4272"/><rect x="3" y="1.2" width="5" height="1.7" fill="#fff"/><rect x="3" y="3.6" width="5" height="1.7" fill="#fff"/><rect x="3" y="6" width="5" height="1.7" fill="#fff"/><path d="M1 2h1.4M1 4.4h1.4M1 6.8h1.4" stroke="#1a2748" stroke-width="0.9"/></svg>
<div style="left:104.2px;top:433.6px;width:0.6px;height:9.2px;background:#c2ccd3;"></div>
<div style="left:107px;top:433.7px;width:24.7px;height:8.8px;background:#5fd65b;border:0.7px solid #8ce887;border-radius:1.4px;background:linear-gradient(#6fe06a,#4cc948);"></div>
<div style="top:433.2px;line-height:10px;font-size:6.9px;color:#1c7322;letter-spacing:0px;white-space:pre;font-weight:bold;left:-85.3px;width:400px;text-align:center;">ON</div>
<div style="left:122.6px;top:435px;width:7.8px;height:6.4px;background:#3f9a46;border-radius:0.9px;background:linear-gradient(#9be398,#43a04b);border:0.5px solid #3c9a44;"></div>
<div style="left:0px;top:446.8px;width:172.2px;height:126.5px;background:#f0f0f0;"></div>
<div style="left:0px;top:448px;width:171.1px;height:122.9px;background:#fff;"></div>
<div style="top:446.8px;line-height:10px;font-size:6.75px;color:#000;letter-spacing:-0.67px;white-space:pre;font-family:'Liberation Mono', monospace;left:-111.43px;width:400px;text-align:center;">FFT</div>
<svg style="left:0px;top:0px;pointer-events:none;" width="1080" height="585" viewBox="0 0 1080 585"><path d="M31.06 456.5V553" stroke="#ececec" stroke-width="0.55"/><path d="M36.57 456.5V553" stroke="#ececec" stroke-width="0.55"/><path d="M40.84 456.5V553" stroke="#ececec" stroke-width="0.55"/><path d="M44.33 456.5V553" stroke="#ececec" stroke-width="0.55"/><path d="M47.28 456.5V553" stroke="#ececec" stroke-width="0.55"/><path d="M49.83 456.5V553" stroke="#ececec" stroke-width="0.55"/><path d="M52.09 456.5V553" stroke="#ececec" stroke-width="0.55"/><path d="M54.1 456.5V553" stroke="#cfcfcf" stroke-width="0.55"/><path d="M67.37 456.5V553" stroke="#ececec" stroke-width="0.55"/><path d="M75.13 456.5V553" stroke="#ececec" stroke-width="0.55"/><path d="M80.64 456.5V553" stroke="#ececec" stroke-width="0.55"/><path d="M84.91 456.5V553" stroke="#ececec" stroke-width="0.55"/><path d="M88.4 456.5V553" stroke="#ececec" stroke-width="0.55"/><path d="M91.35 456.5V553" stroke="#ececec" stroke-width="0.55"/><path d="M93.9 456.5V553" stroke="#ececec" stroke-width="0.55"/><path d="M96.16 456.5V553" stroke="#ececec" stroke-width="0.55"/><path d="M98.17 456.5V553" stroke="#cfcfcf" stroke-width="0.55"/><path d="M111.44 456.5V553" stroke="#ececec" stroke-width="0.55"/><path d="M119.2 456.5V553" stroke="#ececec" stroke-width="0.55"/><path d="M124.71 456.5V553" stroke="#ececec" stroke-width="0.55"/><path d="M128.98 456.5V553" stroke="#ececec" stroke-width="0.55"/><path d="M132.47 456.5V553" stroke="#ececec" stroke-width="0.55"/><path d="M135.42 456.5V553" stroke="#ececec" stroke-width="0.55"/><path d="M137.97 456.5V553" stroke="#ececec" stroke-width="0.55"/><path d="M140.23 456.5V553" stroke="#ececec" stroke-width="0.55"/><path d="M142.24 456.5V553" stroke="#cfcfcf" stroke-width="0.55"/><path d="M23.3 543.75H155.5" stroke="#ececec" stroke-width="0.55"/><path d="M23.3 533.9H155.5" stroke="#cfcfcf" stroke-width="0.55"/><path d="M23.3 524.05H155.5" stroke="#ececec" stroke-width="0.55"/><path d="M23.3 514.2H155.5" stroke="#ececec" stroke-width="0.55"/><path d="M23.3 504.35H155.5" stroke="#cfcfcf" stroke-width="0.55"/><path d="M23.3 494.5H155.5" stroke="#ececec" stroke-width="0.55"/><path d="M23.3 484.65H155.5" stroke="#ececec" stroke-width="0.55"/><path d="M23.3 474.8H155.5" stroke="#cfcfcf" stroke-width="0.55"/><path d="M23.3 464.95H155.5" stroke="#ececec" stroke-width="0.55"/><path d="M23.3 532.2 L26 531.4 L28.9 531.1 L32 531.6 L35.5 532.6 L38.6 533.9 L41.4 536.4 L44.2 542.9 L46.25 536.7 L48 537.4 L49.7 538.75 L51.8 536.6 L53.9 535 L56.6 537.2 L59.4 540.8 L60.8 538 L62.2 536.7 L64 540 L65.6 543.4 L67 546.4 L68.6 540 L70.5 536.7 L71.43 536.18 L72.31 539.4 L73.16 539.6 L73.97 538.56 L74.75 538.95 L75.49 546.17 L76.21 538.54 L76.9 538.22 L77.57 537.29 L78.22 536.52 L78.84 540.18 L79.45 539.31 L80.04 535.6 L80.6 540.26 L81.16 535.93 L81.69 552.5 L82.22 542.73 L82.73 538.81 L83.22 546.41 L83.7 540.58 L84.18 540.08 L84.63 537.34 L85.08 540.35 L85.52 538.99 L85.95 545.96 L86.37 538.76 L86.78 538.92 L87.18 539.88 L87.58 539.63 L87.96 546.02 L88.34 540.19 L88.71 547.95 L89.07 543.77 L89.43 542.77 L89.78 542.65 L90.13 538.45 L90.46 539.61 L90.8 541.07 L91.12 545.49 L91.44 542.69 L91.76 538.82 L92.07 540.63 L92.38 539.29 L92.68 541.88 L92.97 541.41 L93.26 538.61 L93.55 539.67 L93.83 540.26 L94.11 539.22 L94.39 540.52 L94.66 540.84 L94.93 543.86 L95.19 552.5 L95.45 545.79 L95.71 539.09 L95.96 543.95 L96.21 543.22 L96.46 538.53 L96.7 538.06 L96.94 538.3 L97.18 540 L97.41 541.45 L97.64 538.35 L97.87 538.84 L98.1 542.22 L98.32 538.96 L98.54 551.72 L98.76 539.74 L98.98 539.74 L99.19 539.25 L99.4 539.13 L99.61 541.56 L99.82 539.01 L100.02 535.6 L100.22 540.56 L100.42 535.6 L100.62 542.67 L100.82 537.02 L101.01 541.1 L101.2 537.42 L101.39 542.12 L101.58 538.04 L101.77 541.76 L101.95 537.2 L102.14 537.54 L102.32 545.31 L102.5 542.09 L102.67 545.93 L102.85 536.68 L103.03 539.55 L103.2 539.43 L103.37 542.31 L103.54 538.3 L103.71 537.64 L103.88 538.79 L104.04 538.32 L104.2 543.01 L104.37 537.36 L104.53 539.04 L104.69 540.47 L104.85 541.32 L105 537.85 L105.16 540.64 L105.32 539.99 L105.47 537.77 L105.62 539.58 L105.77 549.07 L105.92 545.91 L106.07 537.97 L106.22 539.52 L106.37 539.1 L106.51 540.42 L106.66 542.23 L106.8 540.36 L106.94 537.5 L107.08 536.54 L107.22 540.32 L107.36 541.71 L107.5 541.4 L107.64 538.34 L107.77 536.83 L107.91 539.21 L108.04 552.5 L108.18 535.6 L108.31 541.08 L108.44 541.18 L108.57 537.73 L108.7 541.4 L108.83 541.69 L108.96 545.23 L109.08 540.79 L109.21 548.51 L109.33 545.07 L109.46 538.94 L109.58 537.73 L109.71 543.58 L109.83 541.49 L109.95 540.69 L110.07 539.15 L110.19 547.71 L110.31 540.47 L110.43 542.04 L110.55 536.45 L110.66 539.31 L110.78 541.84 L110.89 540.12 L111.01 538.02 L111.12 539.38 L111.24 535.84 L111.35 539.11 L111.46 536.82 L111.57 551.8 L111.68 542.06 L111.79 543.03 L111.9 552.5 L112.01 539.62 L112.12 536.76 L112.23 541.78 L112.34 539.42 L112.44 539 L112.55 547.26 L112.65 541.32 L112.76 541.42 L112.86 535.76 L112.97 540.7 L113.07 549.84 L113.17 546.81 L113.27 539.89 L113.38 544.56 L113.48 545.48 L113.58 539.71 L113.68 541.05 L113.78 538.25 L113.87 542.32 L113.97 537.79 L114.07 537.63 L114.17 543.47 L114.27 537.19 L114.36 541.16 L114.46 538.74 L114.55 541.16 L114.65 548.13 L114.74 548.44 L114.84 538.21 L114.93 540.01 L115.02 538.75 L115.12 541.09 L115.21 539.91 L115.3 540.73 L115.39 539.57 L115.48 537.09 L115.57 539.9 L115.66 537.49 L115.75 540.02 L115.98 540.87 L116.2 543.45 L116.43 540.38 L116.65 540.2 L116.86 539.96 L117.08 538.03 L117.29 543.39 L117.5 540.97 L117.71 540.74 L117.92 541.83 L118.12 540.24 L118.32 552.15 L118.52 540.84 L118.72 536.89 L118.91 537.62 L119.11 541.39 L119.3 540.39 L119.49 538.41 L119.68 540.52 L119.86 536.26 L120.04 542.13 L120.23 537.78 L120.41 539.32 L120.59 541.68 L120.76 541.77 L120.94 540.03 L121.11 540.45 L121.29 544.7 L121.46 538.52 L121.63 537.73 L121.79 542.8 L121.96 539.93 L122.13 540.36 L122.29 539.89 L122.45 540.95 L122.61 541.97 L122.77 541.19 L122.93 540.84 L123.09 535.6 L123.24 539.71 L123.4 542.16 L123.55 537.2 L123.7 547.6 L123.85 544.69 L124 539.45 L124.15 539.54 L124.3 537.33 L124.44 544.87 L124.59 538.48 L124.73 539.47 L124.87 547.05 L125.02 540.6 L125.16 552.5 L125.3 538.02 L125.44 543.91 L125.57 541.96 L125.71 541.5 L125.85 539.78 L125.98 539.65 L126.11 537.82 L126.25 539.26 L126.38 539.45 L126.51 540.24 L126.64 543.6 L126.77 543.33 L126.9 538.14 L127.03 540.49 L127.15 537.64 L127.28 551.08 L127.4 538.6 L127.53 544.52 L127.65 538.75 L127.77 537.71 L127.9 539.97 L128.02 544.5 L128.14 539.84 L128.26 539.82 L128.38 546.09 L128.49 540.86 L128.61 540.48 L128.73 538.79 L128.84 540.8 L128.96 540.63 L129.07 536.3 L129.19 540.44 L129.3 546.02 L129.41 538.15 L129.53 542.26 L129.64 536.97 L129.75 539.14 L129.86 539.52 L129.97 541.23 L130.08 538.02 L130.18 546.71 L130.29 541.38 L130.4 542.6 L130.5 540.44 L130.61 537.12 L130.72 546.05 L130.82 538.27 L130.92 544.3 L131.03 537.84 L131.13 540.73 L131.23 538.56 L131.33 546.31 L131.44 538.48 L131.54 538.87 L131.64 545.85 L131.74 540.91 L131.84 537.8 L131.93 541.69 L132.03 543.33 L132.13 537.7 L132.23 539.95 L132.32 542.06 L132.42 537.26 L132.52 540.92 L132.61 540.62 L132.71 549.5 L132.8 541.65 L132.89 540.26 L132.99 541.63 L133.08 540.4 L133.17 538.23 L133.26 539.13 L133.36 538.17 L133.45 539.07 L133.54 535.94 L133.63 538.28 L133.72 536.84 L133.81 544.09 L133.9 537 L133.98 539.35 L134.07 536.76 L134.16 542.24 L134.25 542.86 L134.34 540.92 L134.42 552.5 L134.51 547.08 L134.59 540.88 L134.68 540.57 L134.76 540.91 L134.85 541.74 L134.93 541.32 L135.02 540.74 L135.1 538.59 L135.18 540.36 L135.27 538.55 L135.35 538.74 L135.43 540.48 L135.51 538.91 L135.59 542.39 L135.68 540.4 L135.76 540.92 L135.84 538.45 L135.92 552.5 L136 542.69 L136.08 539.07 L136.16 541.22 L136.23 538.13 L136.31 539.63 L136.39 541.7 L136.47 540.02 L136.55 542.88 L136.62 544.02 L136.7 540.35 L136.78 541.69 L136.85 544.37 L136.93 535.6 L137 541.3 L137.08 539.16 L137.15 543.66 L137.23 547.39 L137.3 542.35 L137.38 542.4 L137.45 543.49 L137.53 541.85 L137.6 541.12 L137.67 540.91 L137.74 542.69 L137.82 544.02 L137.89 541.93 L137.96 539.98 L138.03 538.92 L138.1 546.52 L138.18 545.54 L138.25 539.87 L138.32 544.29 L138.39 539.16 L138.46 542.22 L138.53 538.06 L138.6 544.59 L138.67 539.28 L138.74 549.29 L138.8 540.04 L138.87 539.15 L138.94 540.5 L139.01 542.51 L139.08 544.42 L139.15 542.36 L139.21 538.32 L139.28 537.65 L139.35 541.93 L139.41 542.18 L139.48 543.89 L139.55 539.99 L139.61 542.17 L139.68 540.6 L139.74 541.92 L139.81 541.6 L139.87 548.92 L139.94 537.95 L140 538.62 L140.07 546.09 L140.13 542.8 L140.2 540.2 L140.26 541.97 L140.32 545.39 L140.39 540.5 L140.45 543.03 L140.51 542.12 L140.58 552.5 L140.64 543.27 L140.7 543.68 L140.76 538.96 L140.82 539.84 L140.89 550.24 L140.95 549.32 L141.01 540.57 L141.07 547 L141.13 552.5 L141.19 540.66 L141.25 539.5 L141.31 538.99 L141.37 538.46 L141.43 543.36 L141.49 539.35 L141.55 540.66 L141.61 545.76 L141.67 542.59 L141.73 540.09 L141.79 552.5 L141.85 538.62 L141.91 539.12 L141.96 539.2 L142.02 537.32 L142.08 544.27 L142.14 540.33 L142.2 538.09 L142.25 541.5 L142.31 538.36 L142.37 540.13 L142.43 543.49 L142.48 541.55 L142.54 537.73 L142.6 538.55 L142.65 541.4 L142.71 540.91 L142.76 539.95 L142.82 540.87 L142.87 540.59 L142.93 542.54 L142.99 544.9 L143.04 537.72 L143.1 544.16 L143.15 542.2 L143.21 541.23 L143.26 543.82 L143.31 542.33 L143.37 540.47 L143.42 544.41 L143.48 542.12 L143.53 539 L143.58 542.57 L143.64 539.66 L143.69 542.69 L143.74 551.95 L143.8 540.73 L143.85 541.78 L143.9 544.09 L143.95 542.44 L144.01 549.14 L144.06 542.54 L144.11 544.35 L144.16 538.85 L144.22 544.47 L144.27 542.55 L144.32 542.82 L144.37 541.76 L144.42 541.19 L144.47 546.39 L144.52 541.71 L144.57 538.47 L144.63 542.63 L144.68 540.74 L144.73 542.2 L144.78 552.5 L144.83 543.34 L144.88 542.68 L144.93 541.54 L144.98 547.85 L145.03 541.36 L145.08 539.3 L145.13 540.15 L145.18 542.71 L145.22 541 L145.27 546.72 L145.32 539.52 L145.37 538.68 L145.42 542.8 L145.47 536.68 L145.52 540.4 L145.57 541.72 L145.61 544.86 L145.66 540.74 L145.71 542.69 L145.76 540.92 L145.81 543.47 L145.85 540.01 L145.9 540.56 L145.95 537.73 L146 542.19 L146.04 546.59 L146.09 552.5 L146.14 538.28 L146.18 540.3 L146.23 540.34 L146.28 541.11 L146.32 539.01 L146.37 548.9 L146.42 547.16 L146.46 541.92 L146.51 540.73 L146.55 539.88 L146.6 545.05 L146.64 545.76 L146.69 541.69 L146.74 540.48 L146.78 542.01 L146.83 543.43 L146.87 540.13 L146.92 542.58 L146.96 542.31 L147.01 537.34 L147.05 540.7 L147.1 542.8 L147.14 537.65 L147.18 547.98 L147.23 540.18 L147.27 540.03 L147.32 542.35 L147.36 538.58 L147.4 537.58 L147.45 542.99 L147.49 544.98 L147.54 543.54 L147.58 541.09 L147.62 542.79 L147.67 543.61 L147.71 542.89 L147.75 543.35 L147.8 542.05 L147.84 541.25 L147.88 542.02 L147.92 540.26 L147.97 552.5 L148.01 538.44 L148.05 543.24 L148.09 542.36 L148.14 551.54 L148.18 539.05 L148.22 546.17 L148.26 545.18 L148.3 543.06 L148.35 544.52 L148.39 548.23 L148.43 541.69 L148.47 539.64 L148.51 538.98 L148.55 543.46 L148.59 539.96 L148.64 541.78 L148.68 537.29 L148.72 544.71 L148.76 541.84 L148.8 539.95 L148.84 549.5 L148.88 542.3 L148.92 540.08 L148.96 541.07 L149 541.59 L149.04 540.66 L149.08 542.6 L149.12 543.2 L149.16 539.63 L149.2 541.17 L149.24 540.19 L149.28 539.62 L149.32 545.94 L149.36 541.43 L149.4 539.02 L149.44 540.99 L149.48 548.17 L149.52 542.19 L149.56 536.92 L149.6 537.35 L149.64 543.86 L149.68 539.43 L149.72 547.74 L149.75 541.75 L149.79 538.15 L149.83 543.62 L149.87 539.97 L149.91 543.49 L149.95 541.07 L149.99 543.65 L150.02 539.5 L150.06 541.57 L150.1 537.99 L150.14 539.83 L150.18 542.43 L150.21 540.31 L150.25 539.43 L150.29 543.59 L150.33 549.16 L150.36 539.83 L150.4 545.81 L150.44 539.92 L150.48 540.79 L150.51 545.79 L150.55 541.72 L150.59 541.19 L150.63 542.34 L150.66 542.1 L150.7 542.77 L150.74 545.56 L150.77 537.11 L150.81 540.51 L150.85 540.64 L150.88 543.85 L150.92 540.91 L150.96 536.84 L150.99 537.93 L151.03 542.18 L151.07 541.01 L151.1 539.7 L151.14 545.24 L151.17 541.96 L151.21 541.74 L151.25 540.49 L151.28 539.33 L151.32 539.21 L151.35 543.92 L151.39 548.22 L151.42 541.71 L151.46 544.57 L151.5 538.77 L151.53 540.9 L151.57 541.56 L151.6 539.31 L151.64 541.24 L151.67 535.6 L151.71 538.22 L151.74 552.5 L151.78 542.64 L151.81 547.19 L151.85 543.73 L151.88 542.91 L151.92 540.01 L151.95 541.87 L151.98 543.72 L152.02 541.46 L152.05 541.9 L152.09 544.55 L152.12 545.42 L152.16 538.83 L152.19 539.56 L152.22 539.59 L152.26 542.88 L152.29 540.64 L152.33 541.56 L152.36 543.36 L152.39 540.76 L152.43 540.18 L152.46 541.01 L152.5 540.65 L152.53 541.58 L152.56 537.58 L152.6 542.33 L152.63 552.5 L152.66 550.19 L152.7 546.83 L152.73 541.01 L152.76 542.69 L152.8 541.44 L152.83 538.96 L152.86 539.94 L152.89 547.04 L152.93 540.66 L152.96 539.36 L152.99 540.98 L153.03 539.6 L153.06 540.49 L153.09 540.85 L153.12 539.66 L153.16 552.5 L153.19 552.5 L153.22 543.76 L153.25 542.11 L153.29 540.42 L153.32 541.44 L153.35 542.18 L153.38 540.19 L153.41 541.89 L153.45 542.44 L153.48 543.02 L153.51 541.4 L153.54 543.44 L153.57 539.11 L153.61 548.12 L153.64 539.94 L153.67 538.71 L153.7 539.67 L153.73 541.71 L153.76 540.25 L153.79 540.71 L153.83 538.52 L153.86 542.43 L153.89 544.03 L153.92 540.61 L153.95 542.78 L153.98 552.5 L154.01 539.3 L154.04 540.84 L154.08 544.24 L154.11 539.33 L154.14 541.5 L154.17 540.74 L154.2 540.75 L154.23 544.4 L154.26 546.8 L154.29 543.83 L154.32 549.35 L154.35 538.51 L154.38 541.1 L154.41 538.27 L154.44 542.06 L154.47 542.33 L154.5 544.28 L154.53 537.93 L154.56 542.39 L154.59 552.5 L154.62 541.53 L154.65 543.49 L154.68 541.75 L154.71 545.66 L154.74 544.28 L154.77 543.37 L154.8 541.22 L154.83 541.73 L154.86 541.47 L154.89 541.5 L154.92 539.96 L154.95 541.82 L154.98 540.62 L155.01 538.9 L155.04 542.5 L155.07 543.03 L155.1 538.93 L155.13 541.99 L155.16 543.34 L155.19 552.5 L155.22 539.9 L155.25 544.62 L155.27 542.61 L155.3 539.99 L155.33 540.11 L155.36 543.94 L155.39 542.39 L155.42 540.33 L155.45 552.15 L155.48 545.59 L155.51 538.78 L155.5 541" fill="none" stroke="#3a569f" stroke-width="0.5" stroke-linejoin="round"/><rect x="23.3" y="456.5" width="132.2" height="96.5" fill="none" stroke="#8f8f8f" stroke-width="0.8"/></svg>
<div style="top:470.4px;line-height:10px;font-size:6.4px;color:#222;letter-spacing:0px;white-space:pre;font-family:'Liberation Sans', sans-serif;right:1060.2px;">1</div>
<div style="top:500px;line-height:10px;font-size:6.4px;color:#222;letter-spacing:0px;white-space:pre;font-family:'Liberation Sans', sans-serif;right:1058.8px;">1m</div>
<div style="top:529.2px;line-height:10px;font-size:6.4px;color:#222;letter-spacing:0px;white-space:pre;font-family:'Liberation Sans', sans-serif;right:1058.8px;">1u</div>
<div style="top:554.2px;line-height:10px;font-size:6.4px;color:#222;letter-spacing:0px;white-space:pre;font-family:'Liberation Sans', sans-serif;left:-145.6px;width:400px;text-align:center;">100</div>
<div style="top:554.2px;line-height:10px;font-size:6.4px;color:#222;letter-spacing:0px;white-space:pre;font-family:'Liberation Sans', sans-serif;left:-101.3px;width:400px;text-align:center;">1k</div>
<div style="top:554.2px;line-height:10px;font-size:6.4px;color:#222;letter-spacing:0px;white-space:pre;font-family:'Liberation Sans', sans-serif;left:-57.8px;width:400px;text-align:center;">10k</div>
<div style="top:561.2px;line-height:10px;font-size:6.4px;color:#222;letter-spacing:0.03px;white-space:pre;left:-111.38px;width:400px;text-align:center;">Frequency (Hz)</div>
<div style="left:-13px;top:499.4px;width:40px;height:10px;line-height:10px;font-size:6.4px;color:#222;text-align:center;transform:rotate(-90deg);white-space:pre;">Level (Vrms)</div>
<div style="left:172.7px;top:55px;width:3.4px;height:518.5px;background:#4a6b80;"></div>
<div style="left:174.2px;top:304.6px;width:0.9px;height:0.9px;background:#b9c7d1;"></div>
<div style="left:174.2px;top:306.4px;width:0.9px;height:0.9px;background:#b9c7d1;"></div>
<div style="left:174.2px;top:308.2px;width:0.9px;height:0.9px;background:#b9c7d1;"></div>
<div style="left:176px;top:55px;width:212px;height:518.5px;background:#b4c5cf;"></div>
<div style="left:180.2px;top:58.7px;width:78.7px;height:15.7px;background:#b9dbf3;border:1px solid #3f6278;border-radius:2.6px;background:linear-gradient(#d6eaf8 0%,#b7d9f1 55%,#a6cfec 100%);box-shadow:inset 0 0 0 1px rgba(88,128,150,.55);"></div>
<svg style="left:205.9px;top:62.8px;" width="7" height="7.6" viewBox="0 0 7 7.6"><path d="M0.2 0.2v7L6.4 3.7z" fill="#24445a"/></svg>
<div style="top:62.2px;line-height:10px;font-size:7.1px;color:#24445a;letter-spacing:0.01px;white-space:pre;font-weight:bold;left:216px;">Start</div>
<div style="left:180px;top:78.7px;width:7.2px;height:7.2px;background:#fff;border:0.7px solid #4d4d4d;"></div>
<div style="top:77.8px;line-height:10px;font-size:6.75px;color:#000;letter-spacing:-0.09px;white-space:pre;left:190.6px;">Append Graph Data</div>
<div style="left:178.5px;top:91px;width:208px;height:0.7px;background:#d0d8dc;"></div>
<div style="left:181px;top:96.9px;width:1.6px;height:1.6px;background:#222;"></div>
<div style="top:92.9px;line-height:10px;font-size:7.1px;color:#000;letter-spacing:0.18px;white-space:pre;font-weight:bold;left:185.5px;">Generator</div>
<div style="top:105.9px;line-height:10px;font-size:6.75px;color:#000;letter-spacing:0.05px;white-space:pre;right:831.15px;">Waveform:</div>
<div style="left:253.75px;top:104.1px;width:55.75px;height:12.4px;background:#e3e3e3;border:0.6px solid #bdbdbd;"></div>
<div style="top:106.1px;line-height:10px;font-size:6.75px;color:#000;letter-spacing:-0.63px;white-space:pre;left:256.15px;">Sine</div>
<svg style="left:302.1px;top:109.2px;" width="4.4" height="3" viewBox="0 0 4.4 3"><path d="M0.3 0.4l1.9 1.9 1.9-1.9" fill="none" stroke="#444" stroke-width="0.65"/></svg>
<div style="top:125px;line-height:10px;font-size:6.75px;color:#000;letter-spacing:-0.15px;white-space:pre;right:831.35px;">Start Frequency:</div>
<div style="left:254.25px;top:123.25px;width:66.5px;height:12px;background:#fff;border:0.7px solid #858d93;"></div>
<div style="top:124.25px;line-height:10px;font-size:6.75px;color:#000;letter-spacing:-0.17px;white-space:pre;left:256.15px;">20.0000 kHz</div>
<svg style="left:313.85px;top:128.05px;" width="4.4" height="3" viewBox="0 0 4.4 3"><path d="M0.3 0.4l1.9 1.9 1.9-1.9" fill="none" stroke="#444" stroke-width="0.65"/></svg>
<div style="left:322.2px;top:123.3px;width:9.4px;height:5.9px;background:#5b7f97;border-radius:1.6px;"></div>
<svg style="left:324.1px;top:124.5px;" width="5.6" height="3.6" viewBox="0 0 5.6 3.6"><path d="M0.2 3.3L2.8 0.5 5.4 3.3z" fill="#fff"/></svg>
<div style="left:322.2px;top:129.5px;width:9.4px;height:5.9px;background:#5b7f97;border-radius:1.6px;"></div>
<svg style="left:324.1px;top:130.7px;" width="5.6" height="3.6" viewBox="0 0 5.6 3.6"><path d="M0.2 0.3L2.8 3.1 5.4 0.3z" fill="#fff"/></svg>
<div style="top:142.7px;line-height:10px;font-size:6.75px;color:#000;letter-spacing:-0.14px;white-space:pre;right:831.34px;">Stop Frequency:</div>
<div style="left:254.25px;top:140.75px;width:66.5px;height:12px;background:#fff;border:0.7px solid #858d93;"></div>
<div style="top:141.75px;line-height:10px;font-size:6.75px;color:#000;letter-spacing:-0.25px;white-space:pre;left:256.15px;">20.0000 Hz</div>
<svg style="left:313.85px;top:145.55px;" width="4.4" height="3" viewBox="0 0 4.4 3"><path d="M0.3 0.4l1.9 1.9 1.9-1.9" fill="none" stroke="#444" stroke-width="0.65"/></svg>
<div style="left:322.2px;top:140.8px;width:9.4px;height:5.9px;background:#5b7f97;border-radius:1.6px;"></div>
<svg style="left:324.1px;top:142px;" width="5.6" height="3.6" viewBox="0 0 5.6 3.6"><path d="M0.2 3.3L2.8 0.5 5.4 3.3z" fill="#fff"/></svg>
<div style="left:322.2px;top:147px;width:9.4px;height:5.9px;background:#5b7f97;border-radius:1.6px;"></div>
<svg style="left:324.1px;top:148.2px;" width="5.6" height="3.6" viewBox="0 0 5.6 3.6"><path d="M0.2 0.3L2.8 3.1 5.4 0.3z" fill="#fff"/></svg>
<div style="top:159px;line-height:10px;font-size:6.75px;color:#000;letter-spacing:-0.34px;white-space:pre;right:831.54px;">Sweep:</div>
<div style="left:253.75px;top:157.1px;width:68.5px;height:12.4px;background:#e3e3e3;border:0.6px solid #bdbdbd;"></div>
<div style="top:159.1px;line-height:10px;font-size:6.75px;color:#000;letter-spacing:0.06px;white-space:pre;left:256.15px;">Logarithmic</div>
<svg style="left:314.85px;top:162.2px;" width="4.4" height="3" viewBox="0 0 4.4 3"><path d="M0.3 0.4l1.9 1.9 1.9-1.9" fill="none" stroke="#444" stroke-width="0.65"/></svg>
<div style="top:175.3px;line-height:10px;font-size:6.75px;color:#000;letter-spacing:-0.09px;white-space:pre;right:831.29px;">Points:</div>
<div style="left:254.25px;top:173.75px;width:36px;height:11.8px;background:#fff;border:0.7px solid #8e979d;"></div>
<div style="top:174px;line-height:10px;font-size:6.75px;color:#000;letter-spacing:-0.56px;white-space:pre;left:256px;">101</div>
<div style="left:282.2px;top:174.6px;width:7.4px;height:10.2px;background:#fafafa;border:0.5px solid #e2e2e2;"></div>
<svg style="left:284.4px;top:176.1px;" width="3.4" height="2.4" viewBox="0 0 3.4 2.4"><path d="M0 2.2L1.6 0.2 3.2 2.2z" fill="#222"/></svg>
<svg style="left:284.4px;top:180.9px;" width="3.4" height="2.4" viewBox="0 0 3.4 2.4"><path d="M0 0.2L1.6 2.2 3.2 0.2z" fill="#222"/></svg>
<div style="left:295.75px;top:173.75px;width:36.5px;height:12.2px;background:#e3e3e3;border:0.6px solid #b0b0b0;"></div>
<div style="top:175.55px;line-height:10px;font-size:6.75px;color:#000;letter-spacing:-0.25px;white-space:pre;left:113.87px;width:400px;text-align:center;">Edit...</div>
<div style="top:192.7px;line-height:10px;font-size:6.75px;color:#000;letter-spacing:-0.24px;white-space:pre;right:831.44px;">Level:</div>
<div style="left:254.25px;top:190.75px;width:66.5px;height:12.2px;background:#fff;border:0.7px solid #858d93;"></div>
<div style="top:191.85px;line-height:10px;font-size:6.75px;color:#000;letter-spacing:-0.3px;white-space:pre;left:256.15px;">-0.000 dBFS</div>
<svg style="left:313.85px;top:195.65px;" width="4.4" height="3" viewBox="0 0 4.4 3"><path d="M0.3 0.4l1.9 1.9 1.9-1.9" fill="none" stroke="#444" stroke-width="0.65"/></svg>
<div style="left:322.2px;top:190.9px;width:9.4px;height:5.9px;background:#5b7f97;border-radius:1.6px;"></div>
<svg style="left:324.1px;top:192.1px;" width="5.6" height="3.6" viewBox="0 0 5.6 3.6"><path d="M0.2 3.3L2.8 0.5 5.4 3.3z" fill="#fff"/></svg>
<div style="left:322.2px;top:197.1px;width:9.4px;height:5.9px;background:#5b7f97;border-radius:1.6px;"></div>
<svg style="left:324.1px;top:198.3px;" width="5.6" height="3.6" viewBox="0 0 5.6 3.6"><path d="M0.2 0.3L2.8 3.1 5.4 0.3z" fill="#fff"/></svg>
<div style="top:209px;line-height:10px;font-size:6.75px;color:#000;letter-spacing:-0.11px;white-space:pre;right:831.31px;">Offset:</div>
<div style="left:254.25px;top:207px;width:66.5px;height:12.2px;background:#fff;border:0.7px solid #858d93;"></div>
<div style="top:208.1px;line-height:10px;font-size:6.75px;color:#000;letter-spacing:-0.18px;white-space:pre;left:256.15px;">0.000 D</div>
<svg style="left:313.85px;top:211.9px;" width="4.4" height="3" viewBox="0 0 4.4 3"><path d="M0.3 0.4l1.9 1.9 1.9-1.9" fill="none" stroke="#444" stroke-width="0.65"/></svg>
<div style="left:322.2px;top:207.1px;width:9.4px;height:5.9px;background:#5b7f97;border-radius:1.6px;"></div>
<svg style="left:324.1px;top:208.3px;" width="5.6" height="3.6" viewBox="0 0 5.6 3.6"><path d="M0.2 3.3L2.8 0.5 5.4 3.3z" fill="#fff"/></svg>
<div style="left:322.2px;top:213.3px;width:9.4px;height:5.9px;background:#5b7f97;border-radius:1.6px;"></div>
<svg style="left:324.1px;top:214.5px;" width="5.6" height="3.6" viewBox="0 0 5.6 3.6"><path d="M0.2 0.3L2.8 3.1 5.4 0.3z" fill="#fff"/></svg>
<div style="top:227.1px;line-height:10px;font-size:6.75px;color:#000;letter-spacing:-0.55px;white-space:pre;right:831.75px;">EQ:</div>
<div style="left:253.75px;top:225.1px;width:79px;height:12.4px;background:#e3e3e3;border:0.6px solid #bdbdbd;"></div>
<div style="top:227.1px;line-height:10px;font-size:6.75px;color:#000;letter-spacing:0.06px;white-space:pre;left:256.15px;">None</div>
<svg style="left:325.35px;top:230.2px;" width="4.4" height="3" viewBox="0 0 4.4 3"><path d="M0.3 0.4l1.9 1.9 1.9-1.9" fill="none" stroke="#444" stroke-width="0.65"/></svg>
<div style="left:255px;top:242.5px;width:37px;height:11.5px;background:#d3d6d8;border:0.6px solid #c3c8cc;"></div>
<div style="top:243.95px;line-height:10px;font-size:6.75px;color:#8a8f93;letter-spacing:-0.25px;white-space:pre;left:73.37px;width:400px;text-align:center;">Edit...</div>
<div style="top:265.7px;line-height:10px;font-size:6.75px;color:#000;letter-spacing:0.09px;white-space:pre;left:180.6px;">Channels:</div>
<div style="left:178.7px;top:280.2px;width:7.8px;height:8.3px;background:#4f7f96;border-radius:1.3px;background:linear-gradient(#5f8da4,#44748b);"></div>
<div style="top:280px;line-height:10px;font-size:5.8px;color:#fff;letter-spacing:0px;white-space:pre;font-weight:bold;left:-17.2px;width:400px;text-align:center;">1</div>
<div style="left:186.9px;top:280.2px;width:8.7px;height:8.3px;background:#4f7f96;border-radius:1.3px;background:linear-gradient(#5f8da4,#44748b);"></div>
<div style="top:280px;line-height:10px;font-size:5.8px;color:#fff;letter-spacing:0px;white-space:pre;font-weight:bold;left:-8.7px;width:400px;text-align:center;">2</div>
<div style="left:178.5px;top:292.3px;width:208px;height:0.7px;background:#d0d8dc;"></div>
<div style="left:181px;top:298.7px;width:1.6px;height:1.6px;background:#222;"></div>
<div style="top:294.7px;line-height:10px;font-size:7.1px;color:#000;letter-spacing:-0.01px;white-space:pre;font-weight:bold;left:185.5px;">Analyzer</div>
<div style="top:308.2px;line-height:10px;font-size:6.75px;color:#000;letter-spacing:-0.04px;white-space:pre;right:831.24px;">High-pass Filter:</div>
<div style="left:253.75px;top:306.1px;width:79px;height:12.6px;background:#e3e3e3;border:0.6px solid #bdbdbd;"></div>
<div style="top:308.2px;line-height:10px;font-size:6.75px;color:#000;letter-spacing:0.16px;white-space:pre;left:256.15px;">Elliptic</div>
<svg style="left:325.35px;top:311.3px;" width="4.4" height="3" viewBox="0 0 4.4 3"><path d="M0.3 0.4l1.9 1.9 1.9-1.9" fill="none" stroke="#444" stroke-width="0.65"/></svg>
<div style="left:336px;top:306.5px;width:46px;height:12px;background:#fff;border:0.7px solid #8e979d;"></div>
<div style="top:308.1px;line-height:10px;font-size:6.75px;color:#000;letter-spacing:-0.17px;white-space:pre;left:338px;">20 Hz</div>
<div style="top:323.6px;line-height:10px;font-size:6.75px;color:#000;letter-spacing:-0.07px;white-space:pre;right:831.27px;">Low-pass Filter:</div>
<div style="left:253.75px;top:321.6px;width:79px;height:12.4px;background:#e3e3e3;border:0.6px solid #bdbdbd;"></div>
<div style="top:323.6px;line-height:10px;font-size:6.75px;color:#000;letter-spacing:-0.12px;white-space:pre;left:256.15px;">Signal Path</div>
<svg style="left:325.35px;top:326.7px;" width="4.4" height="3" viewBox="0 0 4.4 3"><path d="M0.3 0.4l1.9 1.9 1.9-1.9" fill="none" stroke="#444" stroke-width="0.65"/></svg>
<div style="top:339.1px;line-height:10px;font-size:6.75px;color:#000;letter-spacing:0.1px;white-space:pre;right:831.1px;">Weighting:</div>
<div style="left:253.75px;top:337.1px;width:79px;height:12.4px;background:#e3e3e3;border:0.6px solid #bdbdbd;"></div>
<div style="top:339.1px;line-height:10px;font-size:6.75px;color:#000;letter-spacing:-0.12px;white-space:pre;left:256.15px;">Signal Path</div>
<svg style="left:325.35px;top:342.2px;" width="4.4" height="3" viewBox="0 0 4.4 3"><path d="M0.3 0.4l1.9 1.9 1.9-1.9" fill="none" stroke="#444" stroke-width="0.65"/></svg>
<div style="left:181px;top:353.8px;width:201px;height:0.7px;background:#d0d8dc;"></div>
<div style="top:359.7px;line-height:10px;font-size:6.75px;color:#000;letter-spacing:-0.19px;white-space:pre;right:831.39px;">Phase Ref Channel:</div>
<div style="left:254.25px;top:357.35px;width:28.3px;height:12.8px;background:#e3e3e3;border:0.6px solid #bdbdbd;"></div>
<div style="top:359.55px;line-height:10px;font-size:6.75px;color:#000;letter-spacing:-0.33px;white-space:pre;left:256.65px;">Ch1</div>
<svg style="left:275.15px;top:362.65px;" width="4.4" height="3" viewBox="0 0 4.4 3"><path d="M0.3 0.4l1.9 1.9 1.9-1.9" fill="none" stroke="#444" stroke-width="0.65"/></svg>
<div style="left:178.5px;top:376.3px;width:208px;height:0.7px;background:#d0d8dc;"></div>
<div style="left:179.5px;top:379.75px;width:70px;height:12.5px;background:#e3e3e3;border:0.6px solid #b0b0b0;"></div>
<div style="top:381.7px;line-height:10px;font-size:6.75px;color:#000;letter-spacing:-0.07px;white-space:pre;left:14.46px;width:400px;text-align:center;">Advanced Settings...</div>
<div style="left:388px;top:55px;width:692px;height:379.5px;background:#fff;"></div>
<div style="left:388px;top:55px;width:692px;height:14px;background:#dde4e9;"></div>
<svg style="left:389px;top:57.6px" width="9" height="9" viewBox="0 0 9 9"><rect x="0" y="0" width="9" height="9" fill="#2b4a61"/><path d="M1.4 1.2h6.2v6.6H1.4z" fill="#fff"/><rect x="2.9" y="1.2" width="3.2" height="2.5" fill="#2b4a61"/><rect x="2.6" y="5" width="3.8" height="2.8" fill="#2b4a61"/><rect x="4.1" y="5.6" width="0.9" height="2.2" fill="#fff"/></svg>
<svg style="left:399.6px;top:61.4px;" width="3" height="2" viewBox="0 0 3 2"><path d="M0 0h2.4L1.2 1.5z" fill="#111"/></svg>
<svg style="left:406px;top:57.6px" width="9" height="9" viewBox="0 0 9 9"><rect x="0" y="0" width="9" height="9" fill="#2b4a61"/><rect x="1.2" y="2.6" width="4.6" height="5.2" fill="#fff"/><rect x="3.4" y="1.1" width="4.4" height="5" fill="#2b4a61" stroke="#fff" stroke-width="0.8"/></svg>
<svg style="left:419px;top:57.6px" width="9" height="9" viewBox="0 0 9 9"><rect x="0" y="0" width="9" height="9" fill="#2b4a61"/><rect x="1.1" y="3.3" width="6.8" height="3.4" fill="#fff"/><rect x="2.5" y="1.3" width="4" height="2" fill="none" stroke="#fff" stroke-width="0.7"/><rect x="2.5" y="5.3" width="4" height="2.5" fill="#2b4a61" stroke="#fff" stroke-width="0.7"/></svg>
<div style="left:432.2px;top:57.8px;width:0.6px;height:9px;background:#f7f9fb;"></div>
<svg style="left:435.2px;top:57.6px" width="9" height="9" viewBox="0 0 9 9"><rect x="0" y="0" width="9" height="9" fill="#2b4a61"/><circle cx="4" cy="3.9" r="2.3" fill="none" stroke="#fff" stroke-width="0.9"/><path d="M5.7 5.7l2 2" stroke="#fff" stroke-width="1.2"/><path d="M3 3.9h2M4 2.9v2" stroke="#fff" stroke-width="0.6"/></svg>
<svg style="left:448.3px;top:57.6px" width="9" height="9" viewBox="0 0 9 9"><rect x="0" y="0" width="9" height="9" fill="#2b4a61"/><path d="M4.5 1.4v6.2M1.4 4.5h6.2" stroke="#fff" stroke-width="1"/><path d="M4.5 0.4l1.5 1.7h-3zM4.5 8.6l1.5-1.7h-3zM0.4 4.5l1.7-1.5v3zM8.6 4.5l-1.7-1.5v3z" fill="#fff"/></svg>
<svg style="left:461.4px;top:57.6px" width="9" height="9" viewBox="0 0 9 9"><rect x="0" y="0" width="9" height="9" fill="#2b4a61"/><path d="M0.9 0.9h2.5L0.9 3.4zM8.1 0.9H5.6l2.5 2.5zM0.9 8.1h2.5L0.9 5.6zM8.1 8.1H5.6l2.5-2.5z" fill="#fff"/><path d="M2 2l5 5M7 2L2 7" stroke="#fff" stroke-width="0.8"/></svg>
<div style="left:474.3px;top:57.8px;width:0.6px;height:9px;background:#f7f9fb;"></div>
<svg style="left:477.7px;top:57.6px" width="9" height="9" viewBox="0 0 9 9"><rect x="0" y="0" width="9" height="9" fill="#2b4a61"/><path d="M4.5 0.8v7.4M0.8 4.5h7.4" stroke="#a9b8c3" stroke-width="1.1"/><rect x="3.9" y="3.9" width="1.2" height="1.2" fill="#fff"/></svg>
<div style="left:490px;top:57.8px;width:0.6px;height:9px;background:#f7f9fb;"></div>
<svg style="left:494px;top:57.6px" width="9" height="9" viewBox="0 0 9 9"><rect x="0" y="0" width="9" height="9" fill="#2b4a61"/><rect x="1" y="1" width="7" height="7" fill="none" stroke="#dfe6eb" stroke-width="0.6"/><path d="M1 2.8h7M1 4.5h7M1 6.2h7M2.8 2.8v5.2M4.5 2.8v5.2M6.2 2.8v5.2" stroke="#c9d3da" stroke-width="0.5"/></svg>
<svg style="left:506.6px;top:57.6px" width="9" height="9" viewBox="0 0 9 9"><rect x="0" y="0" width="9" height="9" fill="#2b4a61"/><rect x="0.7" y="1.6" width="7.6" height="5.8" fill="#e9eef2"/><rect x="1.4" y="2.3" width="6.2" height="3" fill="#4f7fb5"/><path d="M1.6 4.6l1.4-1.2 1.3 1 1.4-1.4 1.6 1.4" fill="none" stroke="#fff" stroke-width="0.5"/></svg>
<svg style="left:517px;top:61.4px;" width="3" height="2" viewBox="0 0 3 2"><path d="M0 0h2.4L1.2 1.5z" fill="#111"/></svg>
<svg style="left:523.2px;top:57.6px" width="9" height="9" viewBox="0 0 9 9"><rect x="0" y="0" width="9" height="9" fill="#2b4a61"/></svg>
<div style="left:523.2px;top:57.4px;width:9px;height:9px;line-height:9px;font-size:6.4px;font-style:italic;font-weight:bold;color:#fff;text-align:center;font-family:'Liberation Serif',serif;letter-spacing:-0.3px;">fx</div>
<svg style="left:536.3px;top:57.6px" width="9" height="9" viewBox="0 0 9 9"><rect x="0" y="0" width="9" height="9" fill="#2b4a61"/><circle cx="4.5" cy="4.5" r="2.3" fill="none" stroke="#fff" stroke-width="1.5"/><path d="M4.5 0.9v1.2M4.5 6.9v1.2M0.9 4.5h1.2M6.9 4.5h1.2M2 2l.85.85M6.15 6.15L7 7M7 2l-.85.85M2.85 6.15L2 7" stroke="#fff" stroke-width="1.25"/></svg>
<div style="left:549px;top:57.8px;width:0.6px;height:9px;background:#f7f9fb;"></div>
<div style="top:57.4px;line-height:10px;font-size:6.75px;color:#000;letter-spacing:0px;white-space:pre;left:553.2px;">X</div>
<div style="left:560.5px;top:56.1px;width:29.2px;height:13.2px;background:#fff;"></div>
<div style="top:57.8px;line-height:10px;font-size:6.75px;color:#000;letter-spacing:-0.1px;white-space:pre;left:562.8px;">Hz</div>
<svg style="left:585px;top:61.7px;" width="3" height="2" viewBox="0 0 3 2"><path d="M0 0h2.4L1.2 1.5z" fill="#111"/></svg>
<div style="left:589.7px;top:56.1px;width:9.7px;height:13.2px;background:#c9d3da;"></div>
<div style="top:57.4px;line-height:10px;font-size:6.75px;color:#333;letter-spacing:0px;white-space:pre;left:592.6px;">Y</div>
<div style="left:599.4px;top:55.2px;width:38.8px;height:14.2px;background:#fff;border:0.8px solid #3d87c8;"></div>
<div style="top:57.6px;line-height:10px;font-size:6.75px;color:#000;letter-spacing:-0.1px;white-space:pre;left:602.2px;">dBV</div>
<div style="left:631.4px;top:56.2px;width:5.9px;height:12.2px;background:#cfe4f7;border-left:0.6px solid #7fb2e0;"></div>
<svg style="left:633px;top:61.4px;" width="3.4" height="2.4" viewBox="0 0 3.4 2.4"><path d="M0 0h3L1.5 1.9z" fill="#111"/></svg>
<svg style="left:1069.6px;top:58.6px;" width="7" height="7" viewBox="0 0 7 7"><path d="M3 0.8H0.6v5.6h5.6V4" fill="none" stroke="#27407a" stroke-width="0.9"/><path d="M3.4 0.3h3.2v3.2z" fill="#27407a"/><path d="M6 1L3 4" stroke="#27407a" stroke-width="1"/></svg>
<div style="top:68px;line-height:10px;font-size:6.75px;color:#111;letter-spacing:-0.67px;white-space:pre;font-family:'Liberation Mono', monospace;left:503.67px;width:400px;text-align:center;">RMS Level</div>
<div style="top:77.8px;line-height:10px;font-size:6.4px;color:#222;letter-spacing:0.22px;white-space:pre;right:85.98px;">2023/6/1 13:45:42.489</div>
<svg style="left:0px;top:0px;pointer-events:none;" width="1080" height="585" viewBox="0 0 1080 585"><path d="M447.75 87.5V416.3" stroke="#d2d2d2" stroke-width="0.6"/><path d="M471.98 87.5V416.3" stroke="#d2d2d2" stroke-width="0.6"/><path d="M490.77 87.5V416.3" stroke="#d2d2d2" stroke-width="0.6"/><path d="M506.13 87.5V416.3" stroke="#d2d2d2" stroke-width="0.6"/><path d="M519.11 87.5V416.3" stroke="#e9e9e9" stroke-width="0.6"/><path d="M530.36 87.5V416.3" stroke="#d2d2d2" stroke-width="0.6"/><path d="M540.28 87.5V416.3" stroke="#e9e9e9" stroke-width="0.6"/><path d="M549.15 87.5V416.3" stroke="#d2d2d2" stroke-width="0.6"/><path d="M607.53 87.5V416.3" stroke="#d2d2d2" stroke-width="0.6"/><path d="M641.68 87.5V416.3" stroke="#d2d2d2" stroke-width="0.6"/><path d="M665.91 87.5V416.3" stroke="#d2d2d2" stroke-width="0.6"/><path d="M684.71 87.5V416.3" stroke="#d2d2d2" stroke-width="0.6"/><path d="M700.06 87.5V416.3" stroke="#d2d2d2" stroke-width="0.6"/><path d="M713.05 87.5V416.3" stroke="#e9e9e9" stroke-width="0.6"/><path d="M724.29 87.5V416.3" stroke="#d2d2d2" stroke-width="0.6"/><path d="M734.21 87.5V416.3" stroke="#e9e9e9" stroke-width="0.6"/><path d="M743.09 87.5V416.3" stroke="#d2d2d2" stroke-width="0.6"/><path d="M801.47 87.5V416.3" stroke="#d2d2d2" stroke-width="0.6"/><path d="M835.62 87.5V416.3" stroke="#d2d2d2" stroke-width="0.6"/><path d="M859.85 87.5V416.3" stroke="#d2d2d2" stroke-width="0.6"/><path d="M878.64 87.5V416.3" stroke="#d2d2d2" stroke-width="0.6"/><path d="M894 87.5V416.3" stroke="#d2d2d2" stroke-width="0.6"/><path d="M906.98 87.5V416.3" stroke="#e9e9e9" stroke-width="0.6"/><path d="M918.23 87.5V416.3" stroke="#d2d2d2" stroke-width="0.6"/><path d="M928.15 87.5V416.3" stroke="#e9e9e9" stroke-width="0.6"/><path d="M937.02 87.5V416.3" stroke="#d2d2d2" stroke-width="0.6"/><path d="M413.6 389.7H995.4" stroke="#d2d2d2" stroke-width="0.6"/><path d="M413.6 363.2H995.4" stroke="#d2d2d2" stroke-width="0.6"/><path d="M413.6 336.7H995.4" stroke="#d2d2d2" stroke-width="0.6"/><path d="M413.6 310.2H995.4" stroke="#d2d2d2" stroke-width="0.6"/><path d="M413.6 283.7H995.4" stroke="#d2d2d2" stroke-width="0.6"/><path d="M413.6 257.2H995.4" stroke="#d2d2d2" stroke-width="0.6"/><path d="M413.6 230.7H995.4" stroke="#d2d2d2" stroke-width="0.6"/><path d="M413.6 204.2H995.4" stroke="#d2d2d2" stroke-width="0.6"/><path d="M413.6 177.7H995.4" stroke="#d2d2d2" stroke-width="0.6"/><path d="M413.6 151.2H995.4" stroke="#d2d2d2" stroke-width="0.6"/><path d="M413.6 124.7H995.4" stroke="#d2d2d2" stroke-width="0.6"/><path d="M413.6 98.2H995.4" stroke="#d2d2d2" stroke-width="0.6"/><path d="M413.5 263.3 L417 264.2 L421 264.5 L427 264.2 L436 263 L447.5 260.4 L458 259 L471 257.5 L480 257.2 L491 257.2 L500 257.7 L511 258.2 L529.5 260.3 L548 262.5 L560 264.2 L571 265.8 L583 267.8 L596 269 L607 270 L621 270.1 L631 269.6 L641.5 267.9 L648 267.6 L653 266.3 L659 266 L666 263.3 L672 262.6 L676 260.6 L681 260.4 L684 258.4 L689 258 L694 256.6 L700 255 L706 254.6 L712 253.3 L717 251.8 L724 249.8 L729 249.4 L736 248 L742.5 246.3 L748 246.1 L758 244.3 L775 242.6 L790 241.2 L801.6 240.1 L815 239.4 L828 238.3 L835.5 237.7 L850 236.7 L859.6 235.9 L866 235 L872.4 233.9 L878.4 235 L886 236.2 L893.4 237 L903 236.8 L907 236.6 L912 235.6 L915.6 235.2 L925.1 230.6 L932 230.1 L937.1 224.6 L943.9 223.9 L949 220.2 L955.2 212.3 L959.3 210.9 L966.2 210.6 L972.3 217.8 L978.1 225 L983.9 225.6 L988.4 229 L995.4 233.5" fill="none" stroke="#6f84bb" stroke-width="0.7" stroke-linejoin="round"/><rect x="413.6" y="87.5" width="581.8" height="328.8" fill="none" stroke="#9a9a9a" stroke-width="0.9"/></svg>
<div style="top:384.4px;line-height:10px;font-size:6.5px;color:#222;letter-spacing:0px;white-space:pre;right:669.5px;">-70</div>
<div style="top:357.9px;line-height:10px;font-size:6.5px;color:#222;letter-spacing:0px;white-space:pre;right:669.5px;">-60</div>
<div style="top:331.4px;line-height:10px;font-size:6.5px;color:#222;letter-spacing:0px;white-space:pre;right:669.5px;">-50</div>
<div style="top:304.9px;line-height:10px;font-size:6.5px;color:#222;letter-spacing:0px;white-space:pre;right:669.5px;">-40</div>
<div style="top:278.4px;line-height:10px;font-size:6.5px;color:#222;letter-spacing:0px;white-space:pre;right:669.5px;">-30</div>
<div style="top:251.9px;line-height:10px;font-size:6.5px;color:#222;letter-spacing:0px;white-space:pre;right:669.5px;">-20</div>
<div style="top:225.4px;line-height:10px;font-size:6.5px;color:#222;letter-spacing:0px;white-space:pre;right:669.5px;">-10</div>
<div style="top:198.9px;line-height:10px;font-size:6.5px;color:#222;letter-spacing:0px;white-space:pre;right:669.5px;">0</div>
<div style="top:172.4px;line-height:10px;font-size:6.5px;color:#222;letter-spacing:0px;white-space:pre;right:669.5px;">+10</div>
<div style="top:145.9px;line-height:10px;font-size:6.5px;color:#222;letter-spacing:0px;white-space:pre;right:669.5px;">+20</div>
<div style="top:119.4px;line-height:10px;font-size:6.5px;color:#222;letter-spacing:0px;white-space:pre;right:669.5px;">+30</div>
<div style="top:92.9px;line-height:10px;font-size:6.5px;color:#222;letter-spacing:0px;white-space:pre;right:669.5px;">+40</div>
<div style="top:418.2px;line-height:10px;font-size:6.4px;color:#222;letter-spacing:0px;white-space:pre;left:213.6px;width:400px;text-align:center;">20</div>
<div style="top:418.2px;line-height:10px;font-size:6.4px;color:#222;letter-spacing:0px;white-space:pre;left:247.75px;width:400px;text-align:center;">30</div>
<div style="top:418.2px;line-height:10px;font-size:6.4px;color:#222;letter-spacing:0px;white-space:pre;left:271.98px;width:400px;text-align:center;">40</div>
<div style="top:418.2px;line-height:10px;font-size:6.4px;color:#222;letter-spacing:0px;white-space:pre;left:290.77px;width:400px;text-align:center;">50</div>
<div style="top:418.2px;line-height:10px;font-size:6.4px;color:#222;letter-spacing:0px;white-space:pre;left:306.13px;width:400px;text-align:center;">60</div>
<div style="top:418.2px;line-height:10px;font-size:6.4px;color:#222;letter-spacing:0px;white-space:pre;left:330.36px;width:400px;text-align:center;">80</div>
<div style="top:418.2px;line-height:10px;font-size:6.4px;color:#222;letter-spacing:0px;white-space:pre;left:349.15px;width:400px;text-align:center;">100</div>
<div style="top:418.2px;line-height:10px;font-size:6.4px;color:#222;letter-spacing:0px;white-space:pre;left:407.53px;width:400px;text-align:center;">200</div>
<div style="top:418.2px;line-height:10px;font-size:6.4px;color:#222;letter-spacing:0px;white-space:pre;left:441.68px;width:400px;text-align:center;">300</div>
<div style="top:418.2px;line-height:10px;font-size:6.4px;color:#222;letter-spacing:0px;white-space:pre;left:465.91px;width:400px;text-align:center;">400</div>
<div style="top:418.2px;line-height:10px;font-size:6.4px;color:#222;letter-spacing:0px;white-space:pre;left:484.71px;width:400px;text-align:center;">500</div>
<div style="top:418.2px;line-height:10px;font-size:6.4px;color:#222;letter-spacing:0px;white-space:pre;left:500.06px;width:400px;text-align:center;">600</div>
<div style="top:418.2px;line-height:10px;font-size:6.4px;color:#222;letter-spacing:0px;white-space:pre;left:524.29px;width:400px;text-align:center;">800</div>
<div style="top:418.2px;line-height:10px;font-size:6.4px;color:#222;letter-spacing:0px;white-space:pre;left:543.09px;width:400px;text-align:center;">1k</div>
<div style="top:418.2px;line-height:10px;font-size:6.4px;color:#222;letter-spacing:0px;white-space:pre;left:601.47px;width:400px;text-align:center;">2k</div>
<div style="top:418.2px;line-height:10px;font-size:6.4px;color:#222;letter-spacing:0px;white-space:pre;left:635.62px;width:400px;text-align:center;">3k</div>
<div style="top:418.2px;line-height:10px;font-size:6.4px;color:#222;letter-spacing:0px;white-space:pre;left:659.85px;width:400px;text-align:center;">4k</div>
<div style="top:418.2px;line-height:10px;font-size:6.4px;color:#222;letter-spacing:0px;white-space:pre;left:678.64px;width:400px;text-align:center;">5k</div>
<div style="top:418.2px;line-height:10px;font-size:6.4px;color:#222;letter-spacing:0px;white-space:pre;left:694px;width:400px;text-align:center;">6k</div>
<div style="top:418.2px;line-height:10px;font-size:6.4px;color:#222;letter-spacing:0px;white-space:pre;left:718.23px;width:400px;text-align:center;">8k</div>
<div style="top:418.2px;line-height:10px;font-size:6.4px;color:#222;letter-spacing:0px;white-space:pre;left:737.02px;width:400px;text-align:center;">10k</div>
<div style="top:418.2px;line-height:10px;font-size:6.4px;color:#222;letter-spacing:0px;white-space:pre;left:795.4px;width:400px;text-align:center;">20k</div>
<div style="top:424.1px;line-height:10px;font-size:6.4px;color:#222;letter-spacing:0.03px;white-space:pre;left:503.42px;width:400px;text-align:center;">Frequency (Hz)</div>
<div style="left:364.3px;top:246.2px;width:60px;height:10px;line-height:10px;font-size:6.4px;color:#222;text-align:center;transform:rotate(-90deg);white-space:pre;letter-spacing:-0.1px;">RMS Level (dBV)</div>
<svg style="left:975.6px;top:91.6px;" width="14" height="10" viewBox="0 0 14 10"><text x="0.4" y="7.6" font-size="7.6" font-weight="bold" font-style="italic" fill="#2d6fb8" letter-spacing="-0.9">Ap</text><path d="M9.4 0.8c3.4 1.4 3.6 6.4-.8 8.4" fill="none" stroke="#2d6fb8" stroke-width="1"/><path d="M11.4 1c2.6 2.2 2.2 6.6-1.6 8.6" fill="none" stroke="#5f97d0" stroke-width="0.7"/></svg>
<div style="left:1012.2px;top:87.1px;width:66.2px;height:24.8px;background:#fff;border:0.7px solid #3a3a3a;border-radius:1px;"></div>
<div style="left:1013px;top:87.9px;width:64.6px;height:11px;background:#2b7cb6;"></div>
<div style="top:89px;line-height:10px;font-size:6.9px;color:#fff;letter-spacing:-0.08px;white-space:pre;font-weight:bold;left:840.56px;width:400px;text-align:center;">Data</div>
<svg style="left:1069px;top:90.6px;" width="7" height="5" viewBox="0 0 7 5"><path d="M0.2 2.2h2.4" stroke="#fff" stroke-width="0.7"/><rect x="2.6" y="0.8" width="3.6" height="2.8" fill="none" stroke="#fff" stroke-width="0.7"/><path d="M2.6 3h3.6" stroke="#fff" stroke-width="0.9"/></svg>
<div style="left:1014.2px;top:101.1px;width:7.2px;height:7.2px;background:#fff;border:0.6px solid #7a7a7a;"></div>
<svg style="left:1014.8px;top:101.8px;" width="6" height="6" viewBox="0 0 6 6"><path d="M0.9 3l1.5 1.7L5 1.2" fill="none" stroke="#333" stroke-width="0.7"/></svg>
<div style="left:1023.9px;top:101.9px;width:6.9px;height:6.4px;background:#1b2c7c;"></div>
<div style="top:100.7px;line-height:10px;font-size:6.6px;color:#000;letter-spacing:-0.44px;white-space:pre;left:1032.8px;">Ch1</div>
<div style="left:388px;top:434.3px;width:692px;height:14px;background:#dde4e9;"></div>
<svg style="left:390px;top:436.9px" width="9" height="9" viewBox="0 0 9 9"><rect x="0" y="0" width="9" height="9" fill="#2b4a61"/><path d="M2.3 2v5" stroke="#fff" stroke-width="1.1"/><path d="M6.8 1.9v5.2L3.3 4.5z" fill="#fff"/></svg>
<svg style="left:402.6px;top:436.9px" width="9" height="9" viewBox="0 0 9 9"><rect x="0" y="0" width="9" height="9" fill="#2b4a61"/><path d="M6.7 2v5" stroke="#fff" stroke-width="1.1"/><path d="M2.2 1.9v5.2l3.5-2.6z" fill="#fff"/></svg>
<div style="left:414.8px;top:436.8px;width:0.6px;height:9.4px;background:#f7f9fb;"></div>
<svg style="left:418.6px;top:436.9px" width="9" height="9" viewBox="0 0 9 9"><rect x="0" y="0" width="9" height="9" fill="#2b4a61"/><path d="M4.5 1.2v6.6M1.2 4.5h6.6" stroke="#fff" stroke-width="1.5"/></svg>
<div style="top:437.1px;line-height:10px;font-size:7.1px;color:#000;letter-spacing:-0.07px;white-space:pre;left:429.8px;">Add</div>
<svg style="left:447px;top:440.6px;" width="3" height="2" viewBox="0 0 3 2"><path d="M0 0h2.4L1.2 1.5z" fill="#111"/></svg>
<svg style="left:453px;top:436.9px" width="9" height="9" viewBox="0 0 9 9"><rect x="0" y="0" width="9" height="9" fill="#2b4a61"/><path d="M2 2l5 5M7 2L2 7" stroke="#fff" stroke-width="1.5"/></svg>
<div style="top:437.1px;line-height:10px;font-size:7.1px;color:#000;letter-spacing:-0.09px;white-space:pre;left:464.2px;">Delete</div>
<svg style="left:488.6px;top:440.6px;" width="3" height="2" viewBox="0 0 3 2"><path d="M0 0h2.4L1.2 1.5z" fill="#111"/></svg>
<svg style="left:494.5px;top:436.9px" width="9" height="9" viewBox="0 0 9 9"><rect x="0" y="0" width="9" height="9" fill="#2b4a61"/><rect x="1" y="1.3" width="3" height="2.6" fill="#fff"/><rect x="1" y="5" width="3" height="2.6" fill="#fff"/><path d="M5 2.6h3M5 6.3h3M6.6 1.2v2.8M6.6 4.9v2.8" stroke="#fff" stroke-width="0.7"/></svg>
<div style="top:437.1px;line-height:10px;font-size:7.1px;color:#000;letter-spacing:0.02px;white-space:pre;left:505.7px;">Sort By</div>
<svg style="left:533px;top:440.6px;" width="3" height="2" viewBox="0 0 3 2"><path d="M0 0h2.4L1.2 1.5z" fill="#111"/></svg>
<svg style="left:539px;top:436.9px" width="9" height="9" viewBox="0 0 9 9"><rect x="0" y="0" width="9" height="9" fill="#2b4a61"/><circle cx="4.5" cy="4.5" r="2.3" fill="none" stroke="#fff" stroke-width="1.5"/><path d="M4.5 0.9v1.2M4.5 6.9v1.2M0.9 4.5h1.2M6.9 4.5h1.2M2 2l.85.85M6.15 6.15L7 7M7 2l-.85.85M2.85 6.15L2 7" stroke="#fff" stroke-width="1.25"/></svg>
<div style="top:437.1px;line-height:10px;font-size:7.1px;color:#000;letter-spacing:-0.03px;white-space:pre;left:550.2px;">Details</div>
<svg style="left:1069.8px;top:437.4px;" width="7" height="8" viewBox="0 0 7 8"><path d="M3.3 0.6L5.1 3.6H1.5z" fill="#27407a"/><path d="M0.4 6.2h5.9" stroke="#27407a" stroke-width="0.8"/></svg>
<div style="left:388px;top:448.3px;width:692px;height:45.2px;background:#fff;"></div>
<div style="left:391.1px;top:481px;width:66.6px;height:9.9px;background:#4a6b80;"></div>
<svg style="left:400.3px;top:451.5px;" width="48.6" height="30" viewBox="0 0 48.6 30"><rect x="0" y="-0.4" width="48.6" height="30.4" fill="#3d5c72"/><rect x="1" y="0.6" width="46.6" height="28.6" fill="#e3e9ed"/><rect x="1.7" y="1.3" width="45.2" height="27.2" fill="#fff"/><rect x="2.3" y="1.9" width="44" height="26" fill="none" stroke="#9aa6b0" stroke-width="0.5"/><path d="M8.7 2.8V27.2" stroke="#f0f0f0" stroke-width="0.5"/><path d="M14.9 2.8V27.2" stroke="#f0f0f0" stroke-width="0.5"/><path d="M21.1 2.8V27.2" stroke="#f0f0f0" stroke-width="0.5"/><path d="M27.3 2.8V27.2" stroke="#f0f0f0" stroke-width="0.5"/><path d="M33.5 2.8V27.2" stroke="#f0f0f0" stroke-width="0.5"/><path d="M39.7 2.8V27.2" stroke="#f0f0f0" stroke-width="0.5"/><path d="M2.8 6.7H45.8" stroke="#f0f0f0" stroke-width="0.5"/><path d="M2.8 10.8H45.8" stroke="#f0f0f0" stroke-width="0.5"/><path d="M2.8 14.9H45.8" stroke="#f0f0f0" stroke-width="0.5"/><path d="M2.8 19H45.8" stroke="#f0f0f0" stroke-width="0.5"/><path d="M2.8 23.1H45.8" stroke="#f0f0f0" stroke-width="0.5"/><path d="M4 17.6C14 16.4 22 18.6 30 16.8S40 14.6 42 12.6L44.6 15" fill="none" stroke="#c9cedb" stroke-width="0.5"/></svg>
<div style="top:481.8px;line-height:10px;font-size:6.75px;color:#fff;letter-spacing:-0.28px;white-space:pre;left:224.46px;width:400px;text-align:center;">RMS Level</div>
<svg style="left:470.17px;top:451.5px;" width="48.6" height="30" viewBox="0 0 48.6 30"><rect x="0" y="0" width="48.6" height="30" fill="#c3d0da"/><rect x="1.3" y="1.3" width="46" height="27.4" fill="#fff"/><rect x="2.3" y="2.3" width="44" height="25.4" fill="none" stroke="#9aa6b0" stroke-width="0.5"/><path d="M8.7 2.8V27.2" stroke="#f0f0f0" stroke-width="0.5"/><path d="M14.9 2.8V27.2" stroke="#f0f0f0" stroke-width="0.5"/><path d="M21.1 2.8V27.2" stroke="#f0f0f0" stroke-width="0.5"/><path d="M27.3 2.8V27.2" stroke="#f0f0f0" stroke-width="0.5"/><path d="M33.5 2.8V27.2" stroke="#f0f0f0" stroke-width="0.5"/><path d="M39.7 2.8V27.2" stroke="#f0f0f0" stroke-width="0.5"/><path d="M2.8 6.7H45.8" stroke="#f0f0f0" stroke-width="0.5"/><path d="M2.8 10.8H45.8" stroke="#f0f0f0" stroke-width="0.5"/><path d="M2.8 14.9H45.8" stroke="#f0f0f0" stroke-width="0.5"/><path d="M2.8 19H45.8" stroke="#f0f0f0" stroke-width="0.5"/><path d="M2.8 23.1H45.8" stroke="#f0f0f0" stroke-width="0.5"/><path d="M11 14.6h9M29 14.6h8" stroke="#bcd3ea" stroke-width="0.5"/><circle cx="24.7" cy="14.5" r="3.3" fill="none" stroke="#6a9fd0" stroke-width="0.8"/><path d="M22.4 12.2l4.6 4.6" stroke="#6a9fd0" stroke-width="0.8"/><path d="M41.8 18.8L46 27.4H37.6z" fill="#f5c518" stroke="#d9a800" stroke-width="0.4"/><path d="M41.8 21.6v3M41.8 25.6v0.8" stroke="#222" stroke-width="0.9"/></svg>
<div style="top:481.8px;line-height:10px;font-size:6.75px;color:#000;letter-spacing:-0.22px;white-space:pre;left:294.36px;width:400px;text-align:center;">RMS Level (AC+DC)</div>
<svg style="left:540.04px;top:451.5px;" width="48.6" height="30" viewBox="0 0 48.6 30"><rect x="0" y="0" width="48.6" height="30" fill="#c3d0da"/><rect x="1.3" y="1.3" width="46" height="27.4" fill="#fff"/><rect x="2.3" y="2.3" width="44" height="25.4" fill="none" stroke="#9aa6b0" stroke-width="0.5"/><path d="M8.7 2.8V27.2" stroke="#f0f0f0" stroke-width="0.5"/><path d="M14.9 2.8V27.2" stroke="#f0f0f0" stroke-width="0.5"/><path d="M21.1 2.8V27.2" stroke="#f0f0f0" stroke-width="0.5"/><path d="M27.3 2.8V27.2" stroke="#f0f0f0" stroke-width="0.5"/><path d="M33.5 2.8V27.2" stroke="#f0f0f0" stroke-width="0.5"/><path d="M39.7 2.8V27.2" stroke="#f0f0f0" stroke-width="0.5"/><path d="M2.8 6.7H45.8" stroke="#f0f0f0" stroke-width="0.5"/><path d="M2.8 10.8H45.8" stroke="#f0f0f0" stroke-width="0.5"/><path d="M2.8 14.9H45.8" stroke="#f0f0f0" stroke-width="0.5"/><path d="M2.8 19H45.8" stroke="#f0f0f0" stroke-width="0.5"/><path d="M2.8 23.1H45.8" stroke="#f0f0f0" stroke-width="0.5"/><path d="M4 26h30l6-2 4.6-4" fill="none" stroke="#c9cedb" stroke-width="0.5"/></svg>
<div style="top:481.8px;line-height:10px;font-size:6.75px;color:#000;letter-spacing:-0.25px;white-space:pre;left:364.21px;width:400px;text-align:center;">Gain</div>
<svg style="left:609.91px;top:451.5px;" width="48.6" height="30" viewBox="0 0 48.6 30"><rect x="0" y="0" width="48.6" height="30" fill="#c3d0da"/><rect x="1.3" y="1.3" width="46" height="27.4" fill="#fff"/><rect x="2.3" y="2.3" width="44" height="25.4" fill="none" stroke="#9aa6b0" stroke-width="0.5"/><path d="M8.7 2.8V27.2" stroke="#f0f0f0" stroke-width="0.5"/><path d="M14.9 2.8V27.2" stroke="#f0f0f0" stroke-width="0.5"/><path d="M21.1 2.8V27.2" stroke="#f0f0f0" stroke-width="0.5"/><path d="M27.3 2.8V27.2" stroke="#f0f0f0" stroke-width="0.5"/><path d="M33.5 2.8V27.2" stroke="#f0f0f0" stroke-width="0.5"/><path d="M39.7 2.8V27.2" stroke="#f0f0f0" stroke-width="0.5"/><path d="M2.8 6.7H45.8" stroke="#f0f0f0" stroke-width="0.5"/><path d="M2.8 10.8H45.8" stroke="#f0f0f0" stroke-width="0.5"/><path d="M2.8 14.9H45.8" stroke="#f0f0f0" stroke-width="0.5"/><path d="M2.8 19H45.8" stroke="#f0f0f0" stroke-width="0.5"/><path d="M2.8 23.1H45.8" stroke="#f0f0f0" stroke-width="0.5"/><path d="M20 26.6c3-3 3-12 9-17s8-3 10-5l3-1.4" fill="none" stroke="#cdd2dd" stroke-width="0.5"/></svg>
<div style="top:481.8px;line-height:10px;font-size:6.75px;color:#000;letter-spacing:-0.06px;white-space:pre;left:434.18px;width:400px;text-align:center;">Relative Level...</div>
<svg style="left:679.78px;top:451.5px;" width="48.6" height="30" viewBox="0 0 48.6 30"><rect x="0" y="0" width="48.6" height="30" fill="#c3d0da"/><rect x="1.3" y="1.3" width="46" height="27.4" fill="#fff"/><rect x="2.3" y="2.3" width="44" height="25.4" fill="none" stroke="#9aa6b0" stroke-width="0.5"/><rect x="4.9" y="11.2" width="33" height="6.3" fill="#45589b"/><path d="M4 26h40" stroke="#b9c2da" stroke-width="0.6" stroke-dasharray="1 5.2"/><path d="M3.6 14.4h1.2M38.6 14.4h6" stroke="#c8d0e4" stroke-width="0.5"/></svg>
<div style="top:481.8px;line-height:10px;font-size:6.75px;color:#000;letter-spacing:0.01px;white-space:pre;left:504.08px;width:400px;text-align:center;">Deviation (20.0000...</div>
<svg style="left:749.65px;top:451.5px;" width="48.6" height="30" viewBox="0 0 48.6 30"><rect x="0" y="0" width="48.6" height="30" fill="#c3d0da"/><rect x="1.3" y="1.3" width="46" height="27.4" fill="#fff"/><rect x="2.3" y="2.3" width="44" height="25.4" fill="none" stroke="#9aa6b0" stroke-width="0.5"/><path d="M8.7 2.8V27.2" stroke="#f0f0f0" stroke-width="0.5"/><path d="M14.9 2.8V27.2" stroke="#f0f0f0" stroke-width="0.5"/><path d="M21.1 2.8V27.2" stroke="#f0f0f0" stroke-width="0.5"/><path d="M27.3 2.8V27.2" stroke="#f0f0f0" stroke-width="0.5"/><path d="M33.5 2.8V27.2" stroke="#f0f0f0" stroke-width="0.5"/><path d="M39.7 2.8V27.2" stroke="#f0f0f0" stroke-width="0.5"/><path d="M2.8 6.7H45.8" stroke="#f0f0f0" stroke-width="0.5"/><path d="M2.8 10.8H45.8" stroke="#f0f0f0" stroke-width="0.5"/><path d="M2.8 14.9H45.8" stroke="#f0f0f0" stroke-width="0.5"/><path d="M2.8 19H45.8" stroke="#f0f0f0" stroke-width="0.5"/><path d="M2.8 23.1H45.8" stroke="#f0f0f0" stroke-width="0.5"/></svg>
<div style="top:481.8px;line-height:10px;font-size:6.75px;color:#000;letter-spacing:-0.33px;white-space:pre;left:573.79px;width:400px;text-align:center;">Phase</div>
<svg style="left:819.52px;top:451.5px;" width="48.6" height="30" viewBox="0 0 48.6 30"><rect x="0" y="0" width="48.6" height="30" fill="#c3d0da"/><rect x="1.3" y="1.3" width="46" height="27.4" fill="#fff"/><rect x="2.3" y="2.3" width="44" height="25.4" fill="none" stroke="#9aa6b0" stroke-width="0.5"/><path d="M8.7 2.8V27.2" stroke="#f0f0f0" stroke-width="0.5"/><path d="M14.9 2.8V27.2" stroke="#f0f0f0" stroke-width="0.5"/><path d="M21.1 2.8V27.2" stroke="#f0f0f0" stroke-width="0.5"/><path d="M27.3 2.8V27.2" stroke="#f0f0f0" stroke-width="0.5"/><path d="M33.5 2.8V27.2" stroke="#f0f0f0" stroke-width="0.5"/><path d="M39.7 2.8V27.2" stroke="#f0f0f0" stroke-width="0.5"/><path d="M2.8 6.7H45.8" stroke="#f0f0f0" stroke-width="0.5"/><path d="M2.8 10.8H45.8" stroke="#f0f0f0" stroke-width="0.5"/><path d="M2.8 14.9H45.8" stroke="#f0f0f0" stroke-width="0.5"/><path d="M2.8 19H45.8" stroke="#f0f0f0" stroke-width="0.5"/><path d="M2.8 23.1H45.8" stroke="#f0f0f0" stroke-width="0.5"/><path d="M22 12l2-1 2 1.4 2-1.6 2 1.2 2-1 2 1.6 2-1.2 2 .8 2-1.4 2 1" fill="none" stroke="#c5cbda" stroke-width="0.6"/></svg>
<div style="top:481.8px;line-height:10px;font-size:6.75px;color:#000;letter-spacing:-0.1px;white-space:pre;left:643.77px;width:400px;text-align:center;">THD+N Ratio</div>
<svg style="left:889.39px;top:451.5px;" width="48.6" height="30" viewBox="0 0 48.6 30"><rect x="0" y="0" width="48.6" height="30" fill="#c3d0da"/><rect x="1.3" y="1.3" width="46" height="27.4" fill="#fff"/><rect x="2.3" y="2.3" width="44" height="25.4" fill="none" stroke="#9aa6b0" stroke-width="0.5"/><path d="M8.7 2.8V27.2" stroke="#f0f0f0" stroke-width="0.5"/><path d="M14.9 2.8V27.2" stroke="#f0f0f0" stroke-width="0.5"/><path d="M21.1 2.8V27.2" stroke="#f0f0f0" stroke-width="0.5"/><path d="M27.3 2.8V27.2" stroke="#f0f0f0" stroke-width="0.5"/><path d="M33.5 2.8V27.2" stroke="#f0f0f0" stroke-width="0.5"/><path d="M39.7 2.8V27.2" stroke="#f0f0f0" stroke-width="0.5"/><path d="M2.8 6.7H45.8" stroke="#f0f0f0" stroke-width="0.5"/><path d="M2.8 10.8H45.8" stroke="#f0f0f0" stroke-width="0.5"/><path d="M2.8 14.9H45.8" stroke="#f0f0f0" stroke-width="0.5"/><path d="M2.8 19H45.8" stroke="#f0f0f0" stroke-width="0.5"/><path d="M2.8 23.1H45.8" stroke="#f0f0f0" stroke-width="0.5"/><path d="M22 20l2-1 2 1.4 2-1.6 2 1.2 2-1 2 1.6 2-1.2 2 .8 2-1.4 2 1" fill="none" stroke="#c5cbda" stroke-width="0.6"/></svg>
<div style="top:481.8px;line-height:10px;font-size:6.75px;color:#000;letter-spacing:-0.11px;white-space:pre;left:713.64px;width:400px;text-align:center;">THD+N Level</div>
<svg style="left:959.26px;top:451.5px;" width="48.6" height="30" viewBox="0 0 48.6 30"><rect x="0" y="0" width="48.6" height="30" fill="#c3d0da"/><rect x="1.3" y="1.3" width="46" height="27.4" fill="#fff"/><rect x="2.3" y="2.3" width="44" height="25.4" fill="none" stroke="#9aa6b0" stroke-width="0.5"/><path d="M8.7 2.8V27.2" stroke="#f0f0f0" stroke-width="0.5"/><path d="M14.9 2.8V27.2" stroke="#f0f0f0" stroke-width="0.5"/><path d="M21.1 2.8V27.2" stroke="#f0f0f0" stroke-width="0.5"/><path d="M27.3 2.8V27.2" stroke="#f0f0f0" stroke-width="0.5"/><path d="M33.5 2.8V27.2" stroke="#f0f0f0" stroke-width="0.5"/><path d="M39.7 2.8V27.2" stroke="#f0f0f0" stroke-width="0.5"/><path d="M2.8 6.7H45.8" stroke="#f0f0f0" stroke-width="0.5"/><path d="M2.8 10.8H45.8" stroke="#f0f0f0" stroke-width="0.5"/><path d="M2.8 14.9H45.8" stroke="#f0f0f0" stroke-width="0.5"/><path d="M2.8 19H45.8" stroke="#f0f0f0" stroke-width="0.5"/><path d="M2.8 23.1H45.8" stroke="#f0f0f0" stroke-width="0.5"/><path d="M5 17h8l2-1.4 3 1.6 3-1.8 3 1.4 3-.6h16" fill="none" stroke="#c9cedb" stroke-width="0.5"/></svg>
<div style="top:481.8px;line-height:10px;font-size:6.75px;color:#000;letter-spacing:-0.17px;white-space:pre;left:783.48px;width:400px;text-align:center;">THD Ratio</div>
<svg style="left:1029.13px;top:451.5px;" width="48.6" height="30" viewBox="0 0 48.6 30"><rect x="0" y="0" width="48.6" height="30" fill="#c3d0da"/><rect x="1.3" y="1.3" width="46" height="27.4" fill="#fff"/><rect x="2.3" y="2.3" width="44" height="25.4" fill="none" stroke="#9aa6b0" stroke-width="0.5"/><path d="M8.7 2.8V27.2" stroke="#f0f0f0" stroke-width="0.5"/><path d="M14.9 2.8V27.2" stroke="#f0f0f0" stroke-width="0.5"/><path d="M21.1 2.8V27.2" stroke="#f0f0f0" stroke-width="0.5"/><path d="M27.3 2.8V27.2" stroke="#f0f0f0" stroke-width="0.5"/><path d="M33.5 2.8V27.2" stroke="#f0f0f0" stroke-width="0.5"/><path d="M39.7 2.8V27.2" stroke="#f0f0f0" stroke-width="0.5"/><path d="M2.8 6.7H45.8" stroke="#f0f0f0" stroke-width="0.5"/><path d="M2.8 10.8H45.8" stroke="#f0f0f0" stroke-width="0.5"/><path d="M2.8 14.9H45.8" stroke="#f0f0f0" stroke-width="0.5"/><path d="M2.8 19H45.8" stroke="#f0f0f0" stroke-width="0.5"/><path d="M2.8 23.1H45.8" stroke="#f0f0f0" stroke-width="0.5"/><path d="M5 26h12l2-1 3 1 3-1.2 3 1 3-.6h13" fill="none" stroke="#c9cedb" stroke-width="0.5"/></svg>
<div style="top:481.8px;line-height:10px;font-size:6.75px;color:#000;letter-spacing:-0.21px;white-space:pre;left:853.32px;width:400px;text-align:center;">THD Level</div>
<div style="left:388px;top:493.5px;width:692px;height:9.5px;background:#f0f0f0;"></div>
<div style="left:397.2px;top:494.2px;width:444.6px;height:8.4px;background:#cdcdcd;"></div>
<svg style="left:390.6px;top:495.6px;" width="3.4" height="5" viewBox="0 0 3.4 5"><path d="M2.8 0.4L0.6 2.4 2.8 4.4" fill="none" stroke="#333" stroke-width="0.8"/></svg>
<svg style="left:1074px;top:495.6px;" width="3.4" height="5" viewBox="0 0 3.4 5"><path d="M0.6 0.4L2.8 2.4 0.6 4.4" fill="none" stroke="#333" stroke-width="0.8"/></svg>
<div style="left:388px;top:503px;width:692px;height:3.6px;background:#4a6b80;"></div>
<div style="left:731.4px;top:504.3px;width:0.9px;height:0.9px;background:#b9c7d1;"></div>
<div style="left:733.2px;top:504.3px;width:0.9px;height:0.9px;background:#b9c7d1;"></div>
<div style="left:735px;top:504.3px;width:0.9px;height:0.9px;background:#b9c7d1;"></div>
<div style="left:388px;top:506.6px;width:692px;height:14.2px;background:#dde4e9;"></div>
<div style="top:509.2px;line-height:10px;font-size:7.1px;color:#000;letter-spacing:-0.07px;white-space:pre;left:390px;">Data Sets</div>
<div style="left:425.8px;top:508.6px;width:0.6px;height:9.6px;background:#f7f9fb;"></div>
<div style="left:430px;top:510.2px;width:7px;height:7px;background:#27407a;border-radius:0.8px;"></div>
<svg style="left:431px;top:511.4px;" width="5.2" height="4.8" viewBox="0 0 5.2 4.8"><path d="M0.6 2.4l1.4 1.5L4.6 0.7" fill="none" stroke="#fff" stroke-width="0.9"/></svg>
<div style="left:443px;top:510.2px;width:6.8px;height:7px;background:#fff;border:0.8px solid #27407a;border-radius:0.8px;"></div>
<div style="left:453.4px;top:508.6px;width:0.6px;height:9.6px;background:#f7f9fb;"></div>
<svg style="left:457.5px;top:509.3px" width="9" height="9" viewBox="0 0 9 9"><rect x="0" y="0" width="9" height="9" fill="#2b4a61"/><rect x="0.9" y="2.9" width="7.2" height="5.2" fill="#c3ced6"/><path d="M3.3 2.9v5.2M5.7 2.9v5.2M0.9 5.5h7.2" stroke="#2b4a61" stroke-width="0.6"/><rect x="4.3" y="4.3" width="4.7" height="4.7" fill="#2b4a61"/><path d="M5.2 5.2l2.8 2.8M8 5.2L5.2 8" stroke="#fff" stroke-width="0.9"/></svg>
<div style="top:509.2px;line-height:10px;font-size:7.1px;color:#000;letter-spacing:-0.02px;white-space:pre;left:468.3px;">Clear Data</div>
<svg style="left:506.4px;top:512.7px;" width="3" height="2" viewBox="0 0 3 2"><path d="M0 0h2.4L1.2 1.5z" fill="#111"/></svg>
<svg style="left:512.5px;top:509.3px" width="9" height="9" viewBox="0 0 9 9"><rect x="0" y="0" width="9" height="9" fill="#2b4a61"/><rect x="0.9" y="2.9" width="7.2" height="5.2" fill="#c3ced6"/><path d="M3.3 2.9v5.2M5.7 2.9v5.2M0.9 5.5h7.2" stroke="#2b4a61" stroke-width="0.6"/><rect x="0" y="4.6" width="5.6" height="3.2" fill="#2b4a61"/><path d="M5.2 6.2H1.4M2.8 4.8L1.2 6.2l1.6 1.4" fill="none" stroke="#fff" stroke-width="0.85"/></svg>
<div style="top:509.2px;line-height:10px;font-size:7.1px;color:#000;letter-spacing:0.4px;white-space:pre;left:523.5px;">Import</div>
<svg style="left:551px;top:509.3px" width="9" height="9" viewBox="0 0 9 9"><rect x="0" y="0" width="9" height="9" fill="#2b4a61"/><rect x="0.9" y="2.9" width="7.2" height="5.2" fill="#c3ced6"/><path d="M3.3 2.9v5.2M5.7 2.9v5.2M0.9 5.5h7.2" stroke="#2b4a61" stroke-width="0.6"/><rect x="3.6" y="4.6" width="5.4" height="3.2" fill="#2b4a61"/><path d="M4 6.2h3.8M6.4 4.8L8 6.2 6.4 7.6" fill="none" stroke="#fff" stroke-width="0.85"/></svg>
<div style="top:509.2px;line-height:10px;font-size:7.1px;color:#000;letter-spacing:0.05px;white-space:pre;left:561.8px;">Export</div>
<svg style="left:588px;top:509.3px" width="9" height="9" viewBox="0 0 9 9"><rect x="0" y="0" width="9" height="9" fill="#2b4a61"/><circle cx="4.5" cy="4.5" r="2.3" fill="none" stroke="#fff" stroke-width="1.5"/><path d="M4.5 0.9v1.2M4.5 6.9v1.2M0.9 4.5h1.2M6.9 4.5h1.2M2 2l.85.85M6.15 6.15L7 7M7 2l-.85.85M2.85 6.15L2 7" stroke="#fff" stroke-width="1.25"/></svg>
<div style="top:509.2px;line-height:10px;font-size:7.1px;color:#000;letter-spacing:0.03px;white-space:pre;left:599px;">Data Settings</div>
<svg style="left:1069.8px;top:509.6px;" width="7" height="8" viewBox="0 0 7 8"><path d="M3.3 0.6L5.1 3.6H1.5z" fill="#27407a"/><path d="M0.4 6.2h5.9" stroke="#27407a" stroke-width="0.8"/></svg>
<div style="left:388px;top:520.8px;width:692px;height:52.5px;background:#f0f0f0;"></div>
<div style="left:388px;top:521.4px;width:673px;height:13px;background:#f0f0f0;border-bottom:0.7px solid #c4c4c4;border-top:0.6px solid #e3e3e3;"></div>
<div style="left:401px;top:521.4px;width:0.6px;height:25.2px;background:#d0d0d0;"></div>
<div style="left:448px;top:521.4px;width:0.6px;height:25.2px;background:#d0d0d0;"></div>
<div style="left:520px;top:521.4px;width:0.6px;height:25.2px;background:#d0d0d0;"></div>
<div style="left:1061px;top:521.4px;width:0.6px;height:25.2px;background:#d0d0d0;"></div>
<div style="top:524.8px;line-height:10px;font-size:6.75px;color:#000;letter-spacing:-0.16px;white-space:pre;left:224.42px;width:400px;text-align:center;">Data Set</div>
<div style="top:524.8px;line-height:10px;font-size:6.75px;color:#000;letter-spacing:-0.04px;white-space:pre;left:284.38px;width:400px;text-align:center;">Time</div>
<div style="top:524.8px;line-height:10px;font-size:6.75px;color:#000;letter-spacing:-0.01px;white-space:pre;left:590.6px;width:400px;text-align:center;">Notes</div>
<div style="left:401.4px;top:534.6px;width:659.6px;height:12px;background:#fff;"></div>
<div style="left:448px;top:534.6px;width:0.6px;height:12px;background:#d0d0d0;"></div>
<div style="left:520px;top:534.6px;width:0.6px;height:12px;background:#d0d0d0;"></div>
<div style="left:388px;top:546.4px;width:673px;height:0.6px;background:#d8d8d8;"></div>
<div style="left:390px;top:536.8px;width:6.6px;height:6.6px;background:#f4f4f4;border:0.6px solid #9a9a9a;"></div>
<svg style="left:390.3px;top:537.1px;" width="6" height="6" viewBox="0 0 6 6"><path d="M1 3l1.5 1.7L5 1.2" fill="none" stroke="#8f8f8f" stroke-width="0.7"/></svg>
<div style="top:535.2px;line-height:10px;font-size:6.75px;color:#000;letter-spacing:-0.17px;white-space:pre;left:403.2px;">Measured 1</div>
<div style="top:535.2px;line-height:10px;font-size:6.75px;color:#000;letter-spacing:0.12px;white-space:pre;left:450.4px;">2023/6/1 13:45:42</div>
</div></body></html>
